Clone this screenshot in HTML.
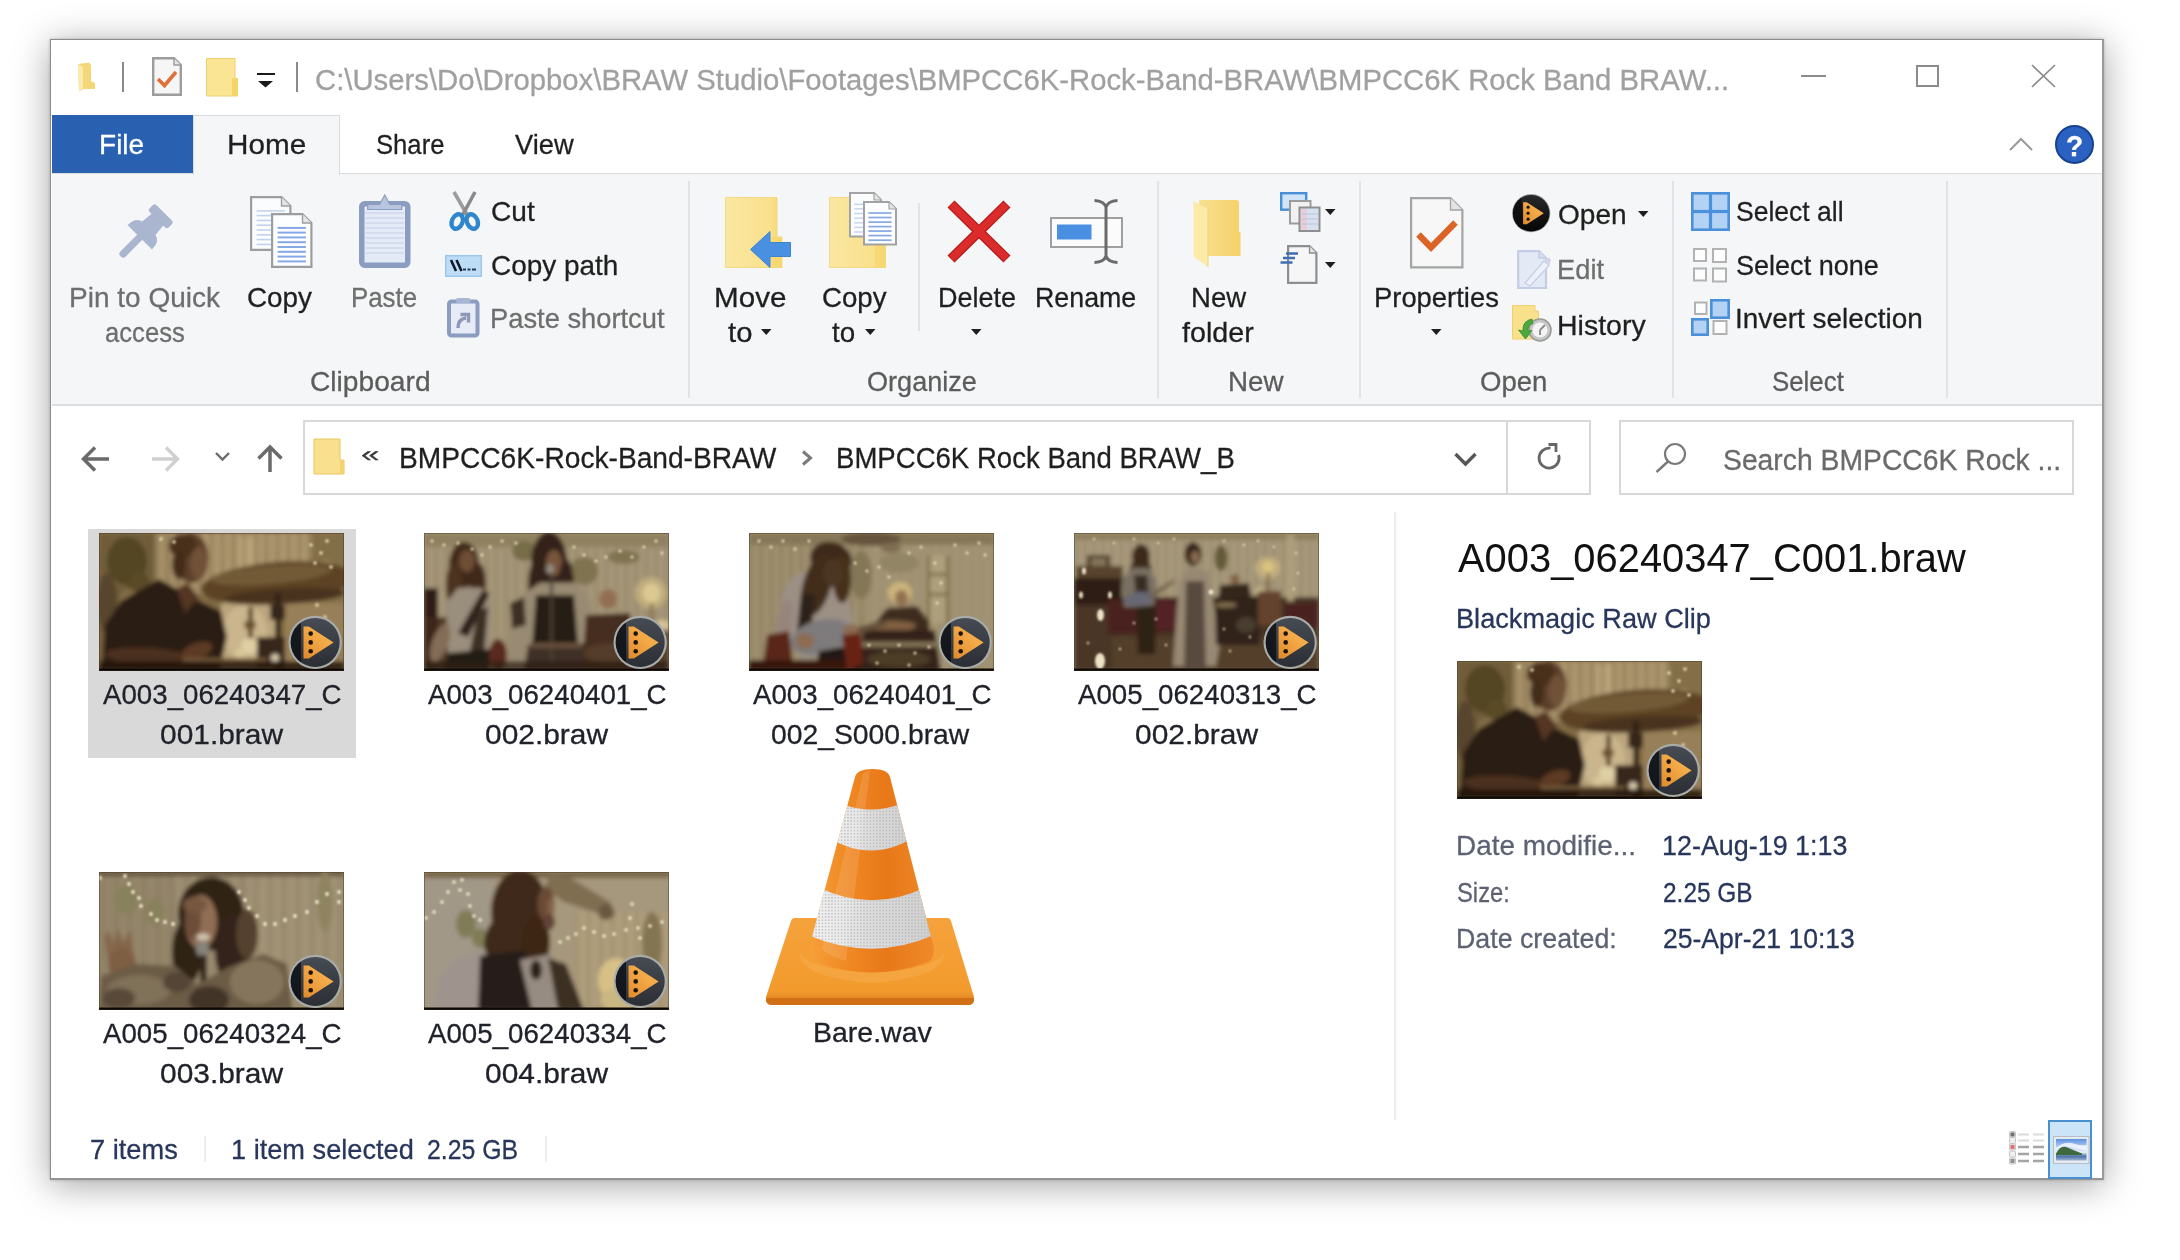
<!DOCTYPE html>
<html lang="en"><head><meta charset="utf-8"><title>File Explorer</title>
<style>
html,body{margin:0;padding:0;}
body{width:2180px;height:1260px;background:#fff;position:relative;overflow:hidden;font-family:"Liberation Sans", sans-serif;}
.a{position:absolute;box-sizing:border-box;}
.t{position:absolute;white-space:nowrap;line-height:1;transform-origin:0 0;display:block;-webkit-text-stroke:0.28px;}
svg{overflow:visible;}
</style></head>
<body>
<div class="a" style="left:50px;top:38.5px;width:2054px;height:1141.5px;background:#fff;border:1.5px solid #8c8c8c;border-right:2.5px solid #9a9a9a;border-bottom:2px solid #949494;box-shadow:0 5px 34px rgba(0,0,0,.36),0 0 3px rgba(0,0,0,.2);"></div>
<span class="t" style="left:315.0px;top:65.5px;font-size:29px;color:#a0a0a0;transform:scaleX(1.0097);">C:\Users\Do\Dropbox\BRAW Studio\Footages\BMPCC6K-Rock-Band-BRAW\BMPCC6K Rock Band BRAW...</span>
<div class="a" style="left:122px;top:62px;width:2px;height:30px;background:#8a8a8a;"></div>
<div class="a" style="left:296px;top:62px;width:2px;height:30px;background:#8a8a8a;"></div>
<div class="a" style="left:1801px;top:75px;width:25px;height:2px;background:#8c8c8c;"></div>
<div class="a" style="left:1916px;top:65px;width:23px;height:22px;border:2px solid #8c8c8c;"></div>
<svg class="a" style="left:2031px;top:64px;" width="25" height="24" viewBox="0 0 25 24"><path d="M1 1 L24 23 M24 1 L1 23" stroke="#8a8a8a" stroke-width="1.7" fill="none"/></svg>
<div class="a" style="left:52px;top:115px;width:141px;height:58px;background:#2a60b0;"></div>
<span class="t" style="left:99.0px;top:130.9px;font-size:28px;color:#ffffff;transform:scaleX(1.0013);">File</span>
<div class="a" style="left:52px;top:173px;width:2050px;height:233px;background:#f5f6f7;border-top:1.5px solid #dadbdc;border-bottom:2px solid #dcdddf;"></div>
<div class="a" style="left:193px;top:115px;width:147px;height:60px;background:#f5f6f7;border:1px solid #dadbdc;border-bottom:none;"></div>
<span class="t" style="left:226.9px;top:130.9px;font-size:28px;color:#1f1f1f;transform:scaleX(1.0594);">Home</span>
<span class="t" style="left:376.1px;top:130.9px;font-size:28px;color:#1f1f1f;transform:scaleX(0.9160);">Share</span>
<span class="t" style="left:515.0px;top:130.9px;font-size:28px;color:#1f1f1f;transform:scaleX(0.9744);">View</span>
<svg class="a" style="left:2009px;top:137px;" width="24" height="14" viewBox="0 0 24 14"><path d="M1 13 L12 2 L23 13" stroke="#9a9a9a" stroke-width="2" fill="none"/></svg>
<div class="a" style="left:2055px;top:124.5px;width:39px;height:39px;background:#2b62c2;border-radius:50%;border:2.5px solid #17428f;"></div>
<span class="t" style="left:2066.1px;top:130.7px;font-size:30px;color:#ffffff;transform:scaleX(0.9375);font-weight:700;">?</span>
<span class="t" style="left:69.3px;top:284.2px;font-size:28px;color:#6e6e6e;transform:scaleX(1.0010);">Pin to Quick</span>
<span class="t" style="left:105.1px;top:318.8px;font-size:28px;color:#6e6e6e;transform:scaleX(0.9161);">access</span>
<span class="t" style="left:247.0px;top:284.2px;font-size:28px;color:#1f1f1f;transform:scaleX(0.9943);">Copy</span>
<span class="t" style="left:351.2px;top:284.2px;font-size:28px;color:#6e6e6e;transform:scaleX(0.9228);">Paste</span>
<span class="t" style="left:491.0px;top:198.4px;font-size:28px;color:#1f1f1f;transform:scaleX(1.0025);">Cut</span>
<span class="t" style="left:491.0px;top:252.2px;font-size:28px;color:#1f1f1f;transform:scaleX(0.9979);">Copy path</span>
<span class="t" style="left:490.0px;top:305.4px;font-size:28px;color:#6e6e6e;transform:scaleX(0.9752);">Paste shortcut</span>
<span class="t" style="left:310.0px;top:368.4px;font-size:28px;color:#5c5c5c;transform:scaleX(1.0062);">Clipboard</span>
<span class="t" style="left:713.9px;top:284.2px;font-size:28px;color:#1f1f1f;transform:scaleX(1.0577);">Move</span>
<span class="t" style="left:727.6px;top:318.8px;font-size:28px;color:#1f1f1f;transform:scaleX(1.0448);">to</span>
<span class="t" style="left:822.4px;top:284.2px;font-size:28px;color:#1f1f1f;transform:scaleX(0.9881);">Copy</span>
<span class="t" style="left:832.4px;top:318.8px;font-size:28px;color:#1f1f1f;transform:scaleX(0.9921);">to</span>
<span class="t" style="left:938.1px;top:284.2px;font-size:28px;color:#1f1f1f;transform:scaleX(0.9647);">Delete</span>
<span class="t" style="left:1035.1px;top:284.2px;font-size:28px;color:#1f1f1f;transform:scaleX(0.9568);">Rename</span>
<span class="t" style="left:866.6px;top:368.4px;font-size:28px;color:#5c5c5c;transform:scaleX(0.9675);">Organize</span>
<span class="t" style="left:1190.9px;top:284.2px;font-size:28px;color:#1f1f1f;transform:scaleX(0.9837);">New</span>
<span class="t" style="left:1182.4px;top:318.8px;font-size:28px;color:#1f1f1f;transform:scaleX(1.0241);">folder</span>
<span class="t" style="left:1228.0px;top:368.4px;font-size:28px;color:#5c5c5c;transform:scaleX(0.9910);">New</span>
<span class="t" style="left:1373.7px;top:284.2px;font-size:28px;color:#1f1f1f;transform:scaleX(0.9782);">Properties</span>
<span class="t" style="left:1558.0px;top:200.6px;font-size:28px;color:#1f1f1f;transform:scaleX(1.0012);">Open</span>
<span class="t" style="left:1557.1px;top:255.7px;font-size:28px;color:#6e6e6e;transform:scaleX(0.9748);">Edit</span>
<span class="t" style="left:1557.0px;top:312.1px;font-size:28px;color:#1f1f1f;transform:scaleX(1.0174);">History</span>
<span class="t" style="left:1479.5px;top:368.4px;font-size:28px;color:#5c5c5c;transform:scaleX(0.9845);">Open</span>
<span class="t" style="left:1736.4px;top:197.9px;font-size:28px;color:#1f1f1f;transform:scaleX(0.9471);">Select all</span>
<span class="t" style="left:1736.3px;top:251.8px;font-size:28px;color:#1f1f1f;transform:scaleX(0.9657);">Select none</span>
<span class="t" style="left:1735.3px;top:305.2px;font-size:28px;color:#1f1f1f;transform:scaleX(0.9971);">Invert selection</span>
<span class="t" style="left:1771.5px;top:368.4px;font-size:28px;color:#5c5c5c;transform:scaleX(0.9229);">Select</span>
<div class="a" style="left:688px;top:181px;width:2px;height:217px;background:#e2e3e5;"></div>
<div class="a" style="left:1157px;top:181px;width:2px;height:217px;background:#e2e3e5;"></div>
<div class="a" style="left:1358.5px;top:181px;width:2px;height:217px;background:#e2e3e5;"></div>
<div class="a" style="left:1672px;top:181px;width:2px;height:217px;background:#e2e3e5;"></div>
<div class="a" style="left:1945.7px;top:181px;width:2px;height:217px;background:#e2e3e5;"></div>
<div class="a" style="left:918px;top:203px;width:2px;height:128px;background:#e2e3e5;"></div>
<svg class="a" style="left:761px;top:329px;" width="10.5" height="6" viewBox="0 0 10.5 6"><path d="M0 0 H10.5 L5.25 6 Z" fill="#1f1f1f"/></svg>
<svg class="a" style="left:865px;top:329px;" width="10.5" height="6" viewBox="0 0 10.5 6"><path d="M0 0 H10.5 L5.25 6 Z" fill="#1f1f1f"/></svg>
<svg class="a" style="left:971.4px;top:329px;" width="10.5" height="6" viewBox="0 0 10.5 6"><path d="M0 0 H10.5 L5.25 6 Z" fill="#1f1f1f"/></svg>
<svg class="a" style="left:1431px;top:329px;" width="10.5" height="6" viewBox="0 0 10.5 6"><path d="M0 0 H10.5 L5.25 6 Z" fill="#1f1f1f"/></svg>
<svg class="a" style="left:1324.5px;top:208.5px;" width="10.5" height="6" viewBox="0 0 10.5 6"><path d="M0 0 H10.5 L5.25 6 Z" fill="#1f1f1f"/></svg>
<svg class="a" style="left:1324.5px;top:261.5px;" width="10.5" height="6" viewBox="0 0 10.5 6"><path d="M0 0 H10.5 L5.25 6 Z" fill="#1f1f1f"/></svg>
<svg class="a" style="left:1637.5px;top:211px;" width="10.5" height="6" viewBox="0 0 10.5 6"><path d="M0 0 H10.5 L5.25 6 Z" fill="#1f1f1f"/></svg>
<svg class="a" style="left:76px;top:62px;" width="20" height="30" viewBox="0 0 20 30"><path d="M2 2 L13 0.5 L15 3 V19 L19 21 V27 L8 27 L3 29.5 Z" fill="#f3d778"/><path d="M2 2 L7 5 V27.5 L3 29.5 Z" fill="#fbeab0"/></svg>
<svg class="a" style="left:152px;top:57px;" width="30" height="39" viewBox="0 0 30 39"><path d="M1.2 1.2 H22 L28.8 8 V37.8 H1.2 Z" fill="#f6f6f6" stroke="#9c9c9c" stroke-width="2.4"/><path d="M22 1.2 V8 H28.8" fill="#e4e4e4" stroke="#9c9c9c" stroke-width="1.44"/><path d="M6 22 L12.5 28.5 L24 15" stroke="#e0703a" stroke-width="3.6" fill="none"/></svg>
<svg class="a" style="left:205.5px;top:57.5px;" width="32" height="38.5" viewBox="0 0 32 38.5"><path d="M0.5 0.5 H29 V20.405 H31.5 V38.0 H0.5 Z" fill="#fae595" stroke="#efd070" stroke-width="1"/><path d="M26 20.405 H31.5 V38.0 H26 Z" fill="#f5d565"/></svg>
<div class="a" style="left:256.5px;top:72.5px;width:18.5px;height:2.2px;background:#1a1a1a;"></div>
<svg class="a" style="left:258px;top:81px;" width="15" height="7" viewBox="0 0 15 7"><path d="M0 0 H15 L7.5 6.5 Z" fill="#1a1a1a"/></svg>
<svg class="a" style="left:119px;top:205px;" width="54" height="54" viewBox="0 0 54 54"><g transform="translate(34.5 18.5) rotate(45) scale(1.08)" fill="#aab5cf"><rect x="-12.5" y="-14" width="25" height="9" rx="2.5"/><path d="M-7.5 -6 H7.5 L9 8 H-9 Z"/><path d="M-16 18 Q-16 7 -8 6 H8 Q16 7 16 18 Z"/><rect x="-3.4" y="16" width="6.8" height="27" rx="3"/></g></svg>
<svg class="a" style="left:249.5px;top:196px;" width="41.5" height="55" viewBox="0 0 41.5 55"><path d="M1.1 1.1 H31.5 L40.4 10 V53.9 H1.1 Z" fill="#fbfcfe" stroke="#9d9d9d" stroke-width="2.2"/><path d="M31.5 1.1 V10 H40.4" fill="#e4e4e4" stroke="#9d9d9d" stroke-width="1.32"/><path d="M6.6 14.9 H34.9" stroke="#c3d3ee" stroke-width="1.6"/><path d="M6.6 19.6 H34.9" stroke="#c3d3ee" stroke-width="1.6"/><path d="M6.6 24.4 H34.9" stroke="#c3d3ee" stroke-width="1.6"/><path d="M6.6 29.2 H34.9" stroke="#c3d3ee" stroke-width="1.6"/><path d="M6.6 34.0 H34.9" stroke="#c3d3ee" stroke-width="1.6"/><path d="M6.6 38.8 H34.9" stroke="#c3d3ee" stroke-width="1.6"/><path d="M6.6 43.6 H34.9" stroke="#c3d3ee" stroke-width="1.6"/><path d="M6.6 48.4 H34.9" stroke="#c3d3ee" stroke-width="1.6"/></svg>
<svg class="a" style="left:270.5px;top:213px;" width="41.5" height="55" viewBox="0 0 41.5 55"><path d="M1.1 1.1 H31.5 L40.4 10 V53.9 H1.1 Z" fill="#fdfeff" stroke="#9d9d9d" stroke-width="2.2"/><path d="M31.5 1.1 V10 H40.4" fill="#e4e4e4" stroke="#9d9d9d" stroke-width="1.32"/><path d="M6.6 14.9 H34.9" stroke="#86a8e4" stroke-width="2"/><path d="M6.6 19.6 H34.9" stroke="#86a8e4" stroke-width="2"/><path d="M6.6 24.4 H34.9" stroke="#86a8e4" stroke-width="2"/><path d="M6.6 29.2 H34.9" stroke="#86a8e4" stroke-width="2"/><path d="M6.6 34.0 H34.9" stroke="#86a8e4" stroke-width="2"/><path d="M6.6 38.8 H34.9" stroke="#86a8e4" stroke-width="2"/><path d="M6.6 43.6 H34.9" stroke="#86a8e4" stroke-width="2"/><path d="M6.6 48.4 H34.9" stroke="#86a8e4" stroke-width="2"/></svg>
<svg class="a" style="left:358.5px;top:194.5px;" width="51.5" height="73" viewBox="0 0 51.5 73"><rect x="2.75" y="8.75" width="46.0" height="61.5" rx="3" fill="#e4eaf6" stroke="#8b9cc1" stroke-width="5.5"/><path d="M6.5 18.0 H45.0" stroke="#cfd8ea" stroke-width="1.4"/><path d="M6.5 23.0 H45.0" stroke="#cfd8ea" stroke-width="1.4"/><path d="M6.5 28.0 H45.0" stroke="#cfd8ea" stroke-width="1.4"/><path d="M6.5 33.0 H45.0" stroke="#cfd8ea" stroke-width="1.4"/><path d="M6.5 38.0 H45.0" stroke="#cfd8ea" stroke-width="1.4"/><path d="M6.5 43.0 H45.0" stroke="#cfd8ea" stroke-width="1.4"/><path d="M6.5 48.0 H45.0" stroke="#cfd8ea" stroke-width="1.4"/><path d="M6.5 53.0 H45.0" stroke="#cfd8ea" stroke-width="1.4"/><path d="M6.5 58.0 H45.0" stroke="#cfd8ea" stroke-width="1.4"/><path d="M8.755 14.5 V9.5 H20.6 L25.75 0 L30.9 9.5 H42.745 V14.5 Z" fill="#b9c6df" stroke="#8b9cc1" stroke-width="1.2"/></svg>
<svg class="a" style="left:449px;top:191px;" width="32" height="41" viewBox="0 0 32 41"><path d="M5 1 L20 27" stroke="#9c9c9c" stroke-width="3.6"/><path d="M26 1 L12 27" stroke="#8a8a8a" stroke-width="3.6"/><ellipse cx="8.2" cy="30.5" rx="5.3" ry="7.6" transform="rotate(24 8.2 30.5)" fill="none" stroke="#2e86cf" stroke-width="4.4"/><ellipse cx="23.3" cy="30.5" rx="5.3" ry="7.6" transform="rotate(-24 23.3 30.5)" fill="none" stroke="#2e86cf" stroke-width="4.4"/></svg>
<svg class="a" style="left:444.5px;top:254.5px;" width="37" height="22" viewBox="0 0 37 22"><rect x="0.7" y="0.7" width="35.6" height="20.6" fill="#bddcf6" stroke="#9cc5ea" stroke-width="1.4"/><path d="M6 5 L11 16 M11.5 5 L16.5 16" stroke="#10182a" stroke-width="2.6"/><path d="M18 14.5 H21 M22.5 14.5 H25.5 M27 14.5 H31" stroke="#2a3a55" stroke-width="1.8"/></svg>
<svg class="a" style="left:446.5px;top:298px;" width="32.5" height="39.5" viewBox="0 0 32.5 39.5"><rect x="2" y="3.5" width="28.5" height="34" rx="2.5" fill="#e6ebf6" stroke="#8b9cc1" stroke-width="4"/><rect x="9" y="0" width="14.5" height="5" rx="2" fill="#a9b6d3"/><path d="M11 30 Q11 21 19 20 M13.5 16.5 H21.5 V24.5" stroke="#8d97ba" stroke-width="3.4" fill="none"/></svg>
<svg class="a" style="left:724.5px;top:196.5px;" width="57.5" height="71" viewBox="0 0 57.5 71"><defs><linearGradient id="fg724" x1="0" x2="1"><stop offset="0" stop-color="#fbe7a2"/><stop offset="0.8" stop-color="#f9e08c"/><stop offset="1" stop-color="#f4d369"/></linearGradient></defs><path d="M0.5 0.5 H52 V40 H57.0 V70.5 H0.5 Z" fill="url(#fg724)" stroke="#f3d985" stroke-width="1"/><path d="M47 40 H57.0 V70.5 H47 Z" fill="#f6d76f" opacity=".7"/></svg>
<svg class="a" style="left:750px;top:231px;" width="41" height="37" viewBox="0 0 41 37"><path d="M0.5 18.5 L20 0.5 V11.5 H40.5 V25.5 H20 V36.5 Z" fill="#4a90e2" stroke="#3f82d2" stroke-width="1"/></svg>
<svg class="a" style="left:829px;top:196.5px;" width="57" height="71" viewBox="0 0 57 71"><defs><linearGradient id="fg829" x1="0" x2="1"><stop offset="0" stop-color="#fbe7a2"/><stop offset="0.8" stop-color="#f9e08c"/><stop offset="1" stop-color="#f4d369"/></linearGradient></defs><path d="M0.5 0.5 H51 V40 H56.5 V70.5 H0.5 Z" fill="url(#fg829)" stroke="#f3d985" stroke-width="1"/><path d="M46 40 H56.5 V70.5 H46 Z" fill="#f6d76f" opacity=".7"/></svg>
<svg class="a" style="left:849px;top:192px;" width="33" height="45.5" viewBox="0 0 33 45.5"><path d="M1.0 1.0 H25 L32.0 8 V44.5 H1.0 Z" fill="#fbfcfe" stroke="#a2a2a2" stroke-width="2"/><path d="M25 1.0 V8 H32.0" fill="#e4e4e4" stroke="#a2a2a2" stroke-width="1.2"/><path d="M5.3 12.3 H27.7" stroke="#c3d3ee" stroke-width="1.4"/><path d="M5.3 16.9 H27.7" stroke="#c3d3ee" stroke-width="1.4"/><path d="M5.3 21.5 H27.7" stroke="#c3d3ee" stroke-width="1.4"/><path d="M5.3 26.2 H27.7" stroke="#c3d3ee" stroke-width="1.4"/><path d="M5.3 30.8 H27.7" stroke="#c3d3ee" stroke-width="1.4"/><path d="M5.3 35.4 H27.7" stroke="#c3d3ee" stroke-width="1.4"/><path d="M5.3 40.0 H27.7" stroke="#c3d3ee" stroke-width="1.4"/></svg>
<svg class="a" style="left:862.5px;top:200.5px;" width="34" height="44.5" viewBox="0 0 34 44.5"><path d="M1.0 1.0 H26 L33.0 8 V43.5 H1.0 Z" fill="#fdfeff" stroke="#a2a2a2" stroke-width="2"/><path d="M26 1.0 V8 H33.0" fill="#e4e4e4" stroke="#a2a2a2" stroke-width="1.2"/><path d="M5.4 12.0 H28.6" stroke="#86a8e4" stroke-width="1.7"/><path d="M5.4 16.5 H28.6" stroke="#86a8e4" stroke-width="1.7"/><path d="M5.4 21.1 H28.6" stroke="#86a8e4" stroke-width="1.7"/><path d="M5.4 25.6 H28.6" stroke="#86a8e4" stroke-width="1.7"/><path d="M5.4 30.1 H28.6" stroke="#86a8e4" stroke-width="1.7"/><path d="M5.4 34.6 H28.6" stroke="#86a8e4" stroke-width="1.7"/><path d="M5.4 39.2 H28.6" stroke="#86a8e4" stroke-width="1.7"/></svg>
<svg class="a" style="left:947px;top:200px;" width="64" height="63" viewBox="0 0 64 63"><path d="M4 4 L60 59 M60 4 L4 59" stroke="#b21a1a" stroke-width="10" fill="none"/><path d="M4.5 4.5 L59.5 58.5 M59.5 4.5 L4.5 58.5" stroke="#dc2b2b" stroke-width="7.4" fill="none"/></svg>
<svg class="a" style="left:1050px;top:199px;" width="73" height="65" viewBox="0 0 73 65"><rect x="1" y="19" width="71" height="29" fill="#fbfbfb" stroke="#a0a0a0" stroke-width="2"/><rect x="7" y="25.5" width="34.5" height="15" fill="#4a90e2"/><path d="M44.5 1.5 Q54 2 56 8 Q58 2 67.5 1.5 M44.5 63.5 Q54 63 56 57 Q58 63 67.5 63.5 M56 7 V58" stroke="#6a6a6a" stroke-width="3" fill="none"/></svg>
<svg class="a" style="left:1193px;top:198px;" width="48" height="70" viewBox="0 0 48 70"><defs><linearGradient id="nf1" x1="0" x2="1"><stop offset="0" stop-color="#f8e090"/><stop offset="1" stop-color="#f4d26a"/></linearGradient></defs><path d="M6 2 H43 Q46 2 46 5 V34 H47.5 V58 H10 Z" fill="url(#nf1)"/><path d="M0.5 3 L15 11 V69 L0.5 58.5 Z" fill="#fbeaa8"/><path d="M15 11 V69" stroke="#efd37a" stroke-width="1"/></svg>
<svg class="a" style="left:1279.5px;top:191.5px;" width="40.5" height="40" viewBox="0 0 40.5 40"><rect x="1.2" y="1.2" width="25" height="16.5" fill="#cfe4f8" stroke="#4a8fd6" stroke-width="2.4"/><rect x="10" y="9" width="20.5" height="22.5" fill="#f1f1f1" stroke="#9c9c9c" stroke-width="2"/><rect x="19.5" y="15.5" width="20" height="23.5" fill="#d9e1f0" stroke="#8e8e8e" stroke-width="2"/><rect x="21" y="17" width="6" height="20.5" fill="#e9cdd6"/><path d="M22 22 H38 M22 27 H38 M22 32 H38" stroke="#b8c6e0" stroke-width="1.2"/></svg>
<svg class="a" style="left:1286.5px;top:245px;" width="30.5" height="39" viewBox="0 0 30.5 39"><path d="M1.1 1.1 H22.5 L29.4 8 V37.9 H1.1 Z" fill="#f6f6f6" stroke="#8e8e8e" stroke-width="2.2"/><path d="M22.5 1.1 V8 H29.4" fill="#e4e4e4" stroke="#8e8e8e" stroke-width="1.32"/></svg>
<svg class="a" style="left:1279.5px;top:251.5px;" width="19" height="15" viewBox="0 0 19 15"><path d="M6 1.5 H18 M3 6 H15 M0.5 10.5 H12.5" stroke="#3d6db3" stroke-width="2.6"/></svg>
<svg class="a" style="left:1409.5px;top:196.5px;" width="53.5" height="71.5" viewBox="0 0 53.5 71.5"><path d="M1.1 1.1 H40.5 L52.4 13 V70.4 H1.1 Z" fill="#f7f7f7" stroke="#a4a4a4" stroke-width="2.2"/><path d="M40.5 1.1 V13 H52.4" fill="#e4e4e4" stroke="#a4a4a4" stroke-width="1.32"/><path d="M8.5 37.5 L21 50.5 L45.5 25.5" stroke="#dc6226" stroke-width="6.4" fill="none"/></svg>
<svg class="a" style="left:1512px;top:194px;" width="38" height="38" viewBox="0 0 38 38"><defs><linearGradient id="bmrb" x1="0" y1="0" x2="0" y2="1"><stop offset="0" stop-color="#2a2a2c"/><stop offset="1" stop-color="#050506"/></linearGradient><linearGradient id="borb" x1="0" x2="1" y1="1" y2="0"><stop offset="0" stop-color="#e08a2c"/><stop offset="0.6" stop-color="#f4aa48"/><stop offset="1" stop-color="#f6b252"/></linearGradient><clipPath id="bcrb"><circle cx="19.2" cy="19.2" r="18.3"/></clipPath></defs><circle cx="19.2" cy="19.2" r="19.1" fill="#3a3a3a" opacity=".45"/><circle cx="19.2" cy="19.2" r="18.3" fill="url(#bmrb)"/><rect x="0.9" y="0.9" width="8.6" height="36.6" fill="#0b0e12" opacity=".8" clip-path="url(#bcrb)"/><path d="M11.1 8.2 H14.8 L31.8 19.2 L14.8 30.2 H11.1 Z" fill="url(#borb)"/><circle cx="16.1" cy="13.2" r="1.6" fill="#1a1410"/><circle cx="16.1" cy="19.2" r="1.6" fill="#1a1410"/><circle cx="16.1" cy="25.2" r="1.6" fill="#1a1410"/></svg>
<svg class="a" style="left:1516.5px;top:249.5px;" width="35" height="40" viewBox="0 0 35 40"><path d="M1.2 1.2 H22 L29 8 V38 H1.2 Z" fill="#e4e9f6" stroke="#c3cde6" stroke-width="2.2"/><path d="M22 1.2 V8 H29" fill="#d4dcef" stroke="#c3cde6" stroke-width="1.4"/><path d="M8 33 L27 11 L32 15.5 L13 36 Z" fill="#eef1f9" stroke="#c9d1e6" stroke-width="1.4"/><path d="M27 11 L30 8 Q33 7 34 10 L32 15.5 Z" fill="#cfd6ea"/></svg>
<svg class="a" style="left:1512px;top:305px;" width="41" height="40" viewBox="0 0 41 40"><path d="M0.5 0.5 H23 V6 H26.5 V34 H0.5 Z" fill="#f9e18c" stroke="#efd070" stroke-width="1"/><circle cx="28" cy="25" r="11" fill="#c6c6c6" stroke="#9a9a9a" stroke-width="1.6"/><circle cx="28" cy="25" r="7.6" fill="#f4f4f4"/><path d="M28 25 L33 20 M28 25 V30" stroke="#8a8a8a" stroke-width="1.8"/><path d="M20 14 Q10 16 11 26 L6.5 25 L13.5 34 L20 25.5 L16 26 Q15.5 20 21 18.5 Z" fill="#4aa83c" stroke="#3b8f30" stroke-width="0.8"/></svg>
<svg class="a" style="left:1690.5px;top:192px;" width="39" height="39" viewBox="0 0 39 39"><rect x="1.3" y="1.3" width="17.9" height="17.9" fill="#b4d2f3" stroke="#4a90da" stroke-width="2.6"/><rect x="19.8" y="1.3" width="17.9" height="17.9" fill="#b4d2f3" stroke="#4a90da" stroke-width="2.6"/><rect x="1.3" y="19.8" width="17.9" height="17.9" fill="#b4d2f3" stroke="#4a90da" stroke-width="2.6"/><rect x="19.8" y="19.8" width="17.9" height="17.9" fill="#b4d2f3" stroke="#4a90da" stroke-width="2.6"/></svg>
<svg class="a" style="left:1693px;top:247.5px;" width="35" height="34" viewBox="0 0 35 34"><rect x="1" y="1" width="12" height="12" fill="#fdfdfd" stroke="#b2b2b2" stroke-width="2"/><rect x="20" y="1" width="13" height="13" fill="#fdfdfd" stroke="#b2b2b2" stroke-width="2"/><rect x="1" y="20.5" width="12" height="12" fill="#fdfdfd" stroke="#b2b2b2" stroke-width="2"/><rect x="20" y="20.5" width="13" height="13" fill="#fdfdfd" stroke="#b2b2b2" stroke-width="2"/></svg>
<svg class="a" style="left:1690.5px;top:298.5px;" width="39" height="39" viewBox="0 0 39 39"><rect x="4" y="3.5" width="11.5" height="11.5" fill="#fdfdfd" stroke="#b2b2b2" stroke-width="2"/><rect x="20.3" y="1.3" width="17.4" height="17.4" fill="#b4d2f3" stroke="#4a90da" stroke-width="2.6"/><rect x="1.3" y="20.3" width="15.4" height="15.4" fill="#b4d2f3" stroke="#4a90da" stroke-width="2.6"/><rect x="22.5" y="22" width="13" height="13" fill="#fdfdfd" stroke="#b2b2b2" stroke-width="2"/></svg>
<svg class="a" style="left:82px;top:446px;" width="28" height="26" viewBox="0 0 28 26"><path d="M27 13 H2 M13 1.5 L1.5 13 L13 24.5" stroke="#6a6a6a" stroke-width="3.5" fill="none"/></svg>
<svg class="a" style="left:151px;top:446px;" width="28" height="26" viewBox="0 0 28 26"><path d="M1 13 H26 M15 1.5 L26.5 13 L15 24.5" stroke="#d0d0d0" stroke-width="3.5" fill="none"/></svg>
<svg class="a" style="left:215px;top:452px;" width="15" height="9" viewBox="0 0 15 9"><path d="M1 1 L7.5 7.5 L14 1" stroke="#6a6a6a" stroke-width="2.4" fill="none"/></svg>
<svg class="a" style="left:257px;top:445px;" width="26" height="28" viewBox="0 0 26 28"><path d="M13 27 V2 M1.5 13.5 L13 2 L24.5 13.5" stroke="#6a6a6a" stroke-width="3.5" fill="none"/></svg>
<div class="a" style="left:303px;top:419.5px;width:1288px;height:75.5px;background:#fff;border:2px solid #d8d8d8;"></div>
<div class="a" style="left:1505.5px;top:421px;width:2px;height:73px;background:#d8d8d8;"></div>
<div class="a" style="left:1619px;top:419.5px;width:454.5px;height:75.5px;background:#fff;border:2px solid #d8d8d8;"></div>
<svg class="a" style="left:314px;top:438px;" width="30" height="36" viewBox="0 0 30 36"><path d="M0 1 H26 V22 H30 V36 H0 Z" fill="#f9e08f" stroke="#e8c860" stroke-width="1"/><path d="M26 22 h4 v14 h-4z" fill="#f3d36c"/></svg>
<span class="t" style="left:361.0px;top:443.5px;font-size:22px;color:#3a3a3a;transform:scaleX(1.5000);">«</span>
<span class="t" style="left:399.1px;top:443.9px;font-size:29px;color:#1f1f1f;transform:scaleX(0.9703);">BMPCC6K-Rock-Band-BRAW</span>
<svg class="a" style="left:801px;top:450px;" width="12" height="16" viewBox="0 0 12 16"><path d="M2 1.5 L9.5 8 L2 14.5" stroke="#7a7a7a" stroke-width="3" fill="none"/></svg>
<span class="t" style="left:835.7px;top:443.9px;font-size:29px;color:#1f1f1f;transform:scaleX(0.9505);">BMPCC6K Rock Band BRAW_B</span>
<svg class="a" style="left:1454px;top:452px;" width="23" height="15" viewBox="0 0 23 15"><path d="M1.5 2 L11.5 12 L21.5 2" stroke="#555" stroke-width="3.4" fill="none"/></svg>
<svg class="a" style="left:1536px;top:444px;" width="26" height="27" viewBox="0 0 26 27"><path d="M14.5 4.2 A10 10 0 1 0 22.6 11" stroke="#666" stroke-width="2.8" fill="none"/><path d="M12.5 0.5 H20 V8" stroke="#666" stroke-width="2.8" fill="none"/></svg>
<svg class="a" style="left:1655px;top:442px;" width="32" height="31" viewBox="0 0 32 31"><circle cx="20" cy="12" r="10" stroke="#7a7a7a" stroke-width="2.2" fill="none"/><path d="M13 19.5 L1.5 30" stroke="#7a7a7a" stroke-width="2.4"/></svg>
<span class="t" style="left:1722.6px;top:445.6px;font-size:29px;color:#6a6a6a;transform:scaleX(0.9760);">Search BMPCC6K Rock ...</span>
<div class="a" style="left:87.5px;top:528.5px;width:268.5px;height:229px;background:#d9d9d9;"></div>
<span class="t" style="left:103.0px;top:681.4px;font-size:28px;color:#20222a;transform:scaleX(0.9887);">A003_06240347_C</span>
<span class="t" style="left:159.7px;top:720.6px;font-size:28px;color:#20222a;transform:scaleX(1.0682);">001.braw</span>
<span class="t" style="left:428.0px;top:681.4px;font-size:28px;color:#20222a;transform:scaleX(0.9887);">A003_06240401_C</span>
<span class="t" style="left:484.7px;top:720.6px;font-size:28px;color:#20222a;transform:scaleX(1.0682);">002.braw</span>
<span class="t" style="left:753.0px;top:681.4px;font-size:28px;color:#20222a;transform:scaleX(0.9887);">A003_06240401_C</span>
<span class="t" style="left:771.0px;top:720.6px;font-size:28px;color:#20222a;transform:scaleX(1.0106);">002_S000.braw</span>
<span class="t" style="left:1078.0px;top:681.4px;font-size:28px;color:#20222a;transform:scaleX(0.9887);">A005_06240313_C</span>
<span class="t" style="left:1134.7px;top:720.6px;font-size:28px;color:#20222a;transform:scaleX(1.0682);">002.braw</span>
<span class="t" style="left:103.0px;top:1020.4px;font-size:28px;color:#20222a;transform:scaleX(0.9887);">A005_06240324_C</span>
<span class="t" style="left:159.7px;top:1059.6px;font-size:28px;color:#20222a;transform:scaleX(1.0682);">003.braw</span>
<span class="t" style="left:428.0px;top:1020.4px;font-size:28px;color:#20222a;transform:scaleX(0.9887);">A005_06240334_C</span>
<span class="t" style="left:484.7px;top:1059.6px;font-size:28px;color:#20222a;transform:scaleX(1.0682);">004.braw</span>
<span class="t" style="left:812.6px;top:1019.4px;font-size:28px;color:#20222a;transform:scaleX(1.0173);">Bare.wav</span>
<svg class="a" width="0" height="0" style="left:0;top:0"><defs><filter id="bl2" x="-10%" y="-10%" width="120%" height="120%"><feGaussianBlur stdDeviation="2.2"/></filter><filter id="bl1" x="-10%" y="-10%" width="120%" height="120%"><feGaussianBlur stdDeviation="1.1"/></filter><filter id="bl4" x="-20%" y="-20%" width="140%" height="140%"><feGaussianBlur stdDeviation="4"/></filter><clipPath id="tc"><rect x="0" y="0" width="245" height="138"/></clipPath></defs></svg>
<svg class="a" style="left:99px;top:533px;" width="245" height="138" viewBox="0 0 245 138"><g clip-path="url(#tc)"><rect width="245" height="138" fill="#8e7c56"/><g filter="url(#bl2)"><rect x="0" y="0" width="245" height="138" fill="#8a764e"/><rect x="50" y="0" width="170" height="62" fill="#b09c74"/><rect x="96" y="0" width="112" height="40" fill="#b8a47a"/><rect x="140" y="4" width="16" height="36" fill="#c6b288"/><rect x="55" y="0" width="4.95" height="70" fill="#5a4a2c" opacity="0.2"/><rect x="66" y="0" width="4.95" height="70" fill="#5a4a2c" opacity="0.2"/><rect x="77" y="0" width="4.95" height="70" fill="#5a4a2c" opacity="0.2"/><rect x="88" y="0" width="4.95" height="70" fill="#5a4a2c" opacity="0.2"/><rect x="99" y="0" width="4.95" height="70" fill="#5a4a2c" opacity="0.2"/><rect x="110" y="0" width="4.95" height="70" fill="#5a4a2c" opacity="0.2"/><rect x="121" y="0" width="4.95" height="70" fill="#5a4a2c" opacity="0.2"/><rect x="132" y="0" width="4.95" height="70" fill="#5a4a2c" opacity="0.2"/><rect x="143" y="0" width="4.95" height="70" fill="#5a4a2c" opacity="0.2"/><rect x="154" y="0" width="4.95" height="70" fill="#5a4a2c" opacity="0.2"/><rect x="165" y="0" width="4.95" height="70" fill="#5a4a2c" opacity="0.2"/><rect x="176" y="0" width="4.95" height="70" fill="#5a4a2c" opacity="0.2"/><rect x="187" y="0" width="4.95" height="70" fill="#5a4a2c" opacity="0.2"/><rect x="198" y="0" width="4.95" height="70" fill="#5a4a2c" opacity="0.2"/><rect x="209" y="0" width="4.95" height="70" fill="#5a4a2c" opacity="0.2"/><rect x="0" y="0" width="56" height="138" fill="#75643f"/><ellipse cx="28" cy="28" rx="20" ry="24" fill="#554a28"/><ellipse cx="40" cy="56" rx="12" ry="18" fill="#5c4f2c"/><ellipse cx="8" cy="70" rx="10" ry="30" fill="#584830"/><ellipse cx="30" cy="70" rx="10" ry="14" fill="#8a7650"/><rect x="213" y="0" width="32" height="75" fill="#8a7850"/><ellipse cx="226" cy="38" rx="12" ry="10" fill="#a89a6c"/><rect x="186" y="70" width="59" height="68" fill="#a08a62"/><rect x="122" y="70" width="58" height="68" fill="#c8b48c"/><ellipse cx="146" cy="100" rx="22" ry="28" fill="#d8c69c"/><ellipse cx="178" cy="50" rx="76" ry="21" fill="#5e4628" transform="rotate(-5 178 50)"/><ellipse cx="172" cy="42" rx="60" ry="9" fill="#77603c" transform="rotate(-5 172 42)"/><ellipse cx="186" cy="63" rx="60" ry="8" fill="#4a3420" transform="rotate(-3 186 63)"/><rect x="176" y="60" width="6" height="78" fill="#2e2218"/><rect x="171" y="72" width="15" height="15" fill="#32261c"/><rect x="149" y="74" width="5" height="36" fill="#5e4828"/><ellipse cx="151" cy="92" rx="6" ry="5" fill="#6e5630"/><rect x="158" y="104" width="28" height="30" fill="#35261a"/><ellipse cx="150" cy="113" rx="8" ry="8" fill="#f0e2b6"/><ellipse cx="141" cy="120" rx="5" ry="5" fill="#e8d8a8"/><ellipse cx="176" cy="125" rx="4" ry="4" fill="#e8dcc0"/><ellipse cx="92" cy="25" rx="17.5" ry="25" fill="#5e422e"/><ellipse cx="84" cy="13" rx="14" ry="12" fill="#49331f"/><ellipse cx="100" cy="30" rx="9" ry="16" fill="#75563c"/><ellipse cx="80" cy="32" rx="7" ry="14" fill="#422e1e"/><polygon points="3,138 6,92 22,68 60,46 78,56 96,66 122,78 128,104 120,138" fill="#261b14"/><polygon points="78,56 88,50 100,64 86,80" fill="#553826"/><ellipse cx="52" cy="124" rx="46" ry="9" fill="#4c3120" transform="rotate(4 52 124)"/><ellipse cx="98" cy="118" rx="16" ry="8" fill="#5e3e28" transform="rotate(-20 98 118)"/><rect x="84" y="125" width="84" height="3.5" fill="#7a6242"/><rect x="0" y="128" width="245" height="10" fill="#20140a" opacity="0.85"/></g><rect width="245" height="138" fill="#4a2c08" opacity="0.1"/><g filter="url(#bl1)"><circle cx="62" cy="6" r="1.8" fill="#e8dcb0"/><circle cx="75" cy="9" r="1.8" fill="#e8dcb0"/><circle cx="212" cy="12" r="1.8" fill="#e8dcb0"/><circle cx="222" cy="20" r="1.8" fill="#e8dcb0"/><circle cx="228" cy="8" r="1.8" fill="#e8dcb0"/><circle cx="216" cy="30" r="1.8" fill="#e8dcb0"/><circle cx="232" cy="34" r="1.8" fill="#e8dcb0"/><circle cx="218" cy="72" r="1.8" fill="#e8dcb0"/><circle cx="226" cy="84" r="1.8" fill="#e8dcb0"/></g><rect x="0" y="135.5" width="245" height="2.5" fill="#0c0806"/><rect x="0" y="0" width="245" height="138" fill="none" stroke="#3a2c1c" stroke-width="1.5" opacity=".55"/></g><defs><linearGradient id="bmt1" x1="0" y1="0" x2="0" y2="1"><stop offset="0" stop-color="#474c54"/><stop offset="1" stop-color="#2b2e34"/></linearGradient><linearGradient id="bot1" x1="0" x2="1" y1="1" y2="0"><stop offset="0" stop-color="#e08a2c"/><stop offset="0.6" stop-color="#f4aa48"/><stop offset="1" stop-color="#f6b252"/></linearGradient><clipPath id="bct1"><circle cx="216.2" cy="109.4" r="24.5"/></clipPath></defs><circle cx="216.2" cy="109.4" r="26.7" fill="#a9aba8"/><circle cx="216.2" cy="109.4" r="24.5" fill="url(#bmt1)"/><rect x="189.5" y="82.7" width="12.5" height="53.4" fill="#0b0e12" opacity=".8" clip-path="url(#bct1)"/><path d="M204.5 93.4 H209.8 L234.6 109.4 L209.8 125.4 H204.5 Z" fill="url(#bot1)"/><circle cx="211.7" cy="100.6" r="2.3" fill="#1a1410"/><circle cx="211.7" cy="109.4" r="2.3" fill="#1a1410"/><circle cx="211.7" cy="118.2" r="2.3" fill="#1a1410"/></svg>
<svg class="a" style="left:424px;top:533px;" width="245" height="138" viewBox="0 0 245 138"><g clip-path="url(#tc)"><rect width="245" height="138" fill="#b0a486"/><g filter="url(#bl2)"><rect x="0" y="0" width="245" height="138" fill="#b0a486"/><rect x="0" y="0" width="4.5" height="138" fill="#5a4c30" opacity="0.12"/><rect x="10" y="0" width="4.5" height="138" fill="#5a4c30" opacity="0.12"/><rect x="20" y="0" width="4.5" height="138" fill="#5a4c30" opacity="0.12"/><rect x="30" y="0" width="4.5" height="138" fill="#5a4c30" opacity="0.12"/><rect x="40" y="0" width="4.5" height="138" fill="#5a4c30" opacity="0.12"/><rect x="50" y="0" width="4.5" height="138" fill="#5a4c30" opacity="0.12"/><rect x="60" y="0" width="4.5" height="138" fill="#5a4c30" opacity="0.12"/><rect x="70" y="0" width="4.5" height="138" fill="#5a4c30" opacity="0.12"/><rect x="80" y="0" width="4.5" height="138" fill="#5a4c30" opacity="0.12"/><rect x="90" y="0" width="4.5" height="138" fill="#5a4c30" opacity="0.12"/><rect x="100" y="0" width="4.5" height="138" fill="#5a4c30" opacity="0.12"/><rect x="110" y="0" width="4.5" height="138" fill="#5a4c30" opacity="0.12"/><rect x="120" y="0" width="4.5" height="138" fill="#5a4c30" opacity="0.12"/><rect x="130" y="0" width="4.5" height="138" fill="#5a4c30" opacity="0.12"/><rect x="140" y="0" width="4.5" height="138" fill="#5a4c30" opacity="0.12"/><rect x="150" y="0" width="4.5" height="138" fill="#5a4c30" opacity="0.12"/><rect x="160" y="0" width="4.5" height="138" fill="#5a4c30" opacity="0.12"/><rect x="170" y="0" width="4.5" height="138" fill="#5a4c30" opacity="0.12"/><rect x="180" y="0" width="4.5" height="138" fill="#5a4c30" opacity="0.12"/><rect x="190" y="0" width="4.5" height="138" fill="#5a4c30" opacity="0.12"/><rect x="200" y="0" width="4.5" height="138" fill="#5a4c30" opacity="0.12"/><rect x="210" y="0" width="4.5" height="138" fill="#5a4c30" opacity="0.12"/><rect x="220" y="0" width="4.5" height="138" fill="#5a4c30" opacity="0.12"/><rect x="230" y="0" width="4.5" height="138" fill="#5a4c30" opacity="0.12"/><rect x="240" y="0" width="4.5" height="138" fill="#5a4c30" opacity="0.12"/><rect x="0" y="0" width="245" height="14" fill="#978c6a"/><ellipse cx="160" cy="38" rx="14" ry="14" fill="#857c58"/><ellipse cx="100" cy="18" rx="12" ry="10" fill="#7c7450"/><ellipse cx="200" cy="24" rx="16" ry="7" fill="#857c58"/><rect x="0" y="55" width="14" height="83" fill="#2a1a12"/><rect x="0" y="84" width="24" height="54" fill="#402a1c" opacity="0.85"/><ellipse cx="40" cy="32" rx="15" ry="23" fill="#412c1d"/><ellipse cx="43" cy="28" rx="8" ry="11" fill="#73523a"/><ellipse cx="30" cy="52" rx="8" ry="22" fill="#4c3423"/><ellipse cx="54" cy="50" rx="8" ry="20" fill="#412c1d"/><polygon points="22,70 34,55 58,55 68,72 66,120 24,124" fill="#a39a8a"/><polygon points="58,58 66,60 44,104 34,100" fill="#2c241e"/><polygon points="54,78 64,74 60,122 46,118" fill="#3a3028"/><polygon points="24,120 66,116 66,138 20,138" fill="#1e1a16"/><ellipse cx="16" cy="110" rx="8" ry="20" fill="#8a7460" transform="rotate(20 16 110)"/><ellipse cx="74" cy="122" rx="9" ry="16" fill="#5c2c24"/><ellipse cx="125" cy="30" rx="18" ry="31" fill="#33231a"/><ellipse cx="130" cy="30" rx="8" ry="13" fill="#7d5c42"/><ellipse cx="112" cy="52" rx="8" ry="24" fill="#33231a"/><ellipse cx="142" cy="52" rx="8" ry="26" fill="#33231a"/><polygon points="84,138 86,92 98,62 116,50 152,50 166,66 172,104 168,138" fill="#a1967f"/><polygon points="112,62 150,62 154,112 108,114" fill="#221a16"/><polygon points="104,112 160,110 162,138 100,138" fill="#3c302a"/><polygon points="86,70 100,64 102,92 88,96" fill="#3a3028"/><rect x="126" y="36" width="3" height="102" fill="#4a4238"/><ellipse cx="126" cy="36" rx="4" ry="5" fill="#9a968a"/><rect x="106" y="110" width="52" height="5" fill="#6a5242"/><ellipse cx="184" cy="66" rx="9" ry="10" fill="#9a7858"/><polygon points="162,82 206,80 214,138 158,138" fill="#452f20"/><ellipse cx="186" cy="120" rx="26" ry="10" fill="#54402e"/><ellipse cx="227" cy="60" rx="16" ry="16" fill="#cbbb8a"/><ellipse cx="227.5" cy="60" rx="9" ry="10" fill="#ecdca2"/><rect x="226" y="70" width="3" height="20" fill="#8a7444"/><rect x="204" y="98" width="41" height="40" fill="#54422e"/><ellipse cx="238" cy="92" rx="8" ry="5" fill="#e4d6a4"/><rect x="0" y="128" width="245" height="10" fill="#2a1e14" opacity="0.7"/></g><rect width="245" height="138" fill="#4a2c08" opacity="0.1"/><g filter="url(#bl1)"><circle cx="8" cy="8" r="1.5" fill="#ece2bc"/><circle cx="20" cy="12" r="1.5" fill="#ece2bc"/><circle cx="34" cy="10" r="1.5" fill="#ece2bc"/><circle cx="48" cy="16" r="1.5" fill="#ece2bc"/><circle cx="58" cy="22" r="1.5" fill="#ece2bc"/><circle cx="66" cy="14" r="1.5" fill="#ece2bc"/><circle cx="78" cy="8" r="1.5" fill="#ece2bc"/><circle cx="92" cy="10" r="1.5" fill="#ece2bc"/><circle cx="150" cy="14" r="1.5" fill="#ece2bc"/><circle cx="160" cy="22" r="1.5" fill="#ece2bc"/><circle cx="172" cy="28" r="1.5" fill="#ece2bc"/><circle cx="182" cy="24" r="1.5" fill="#ece2bc"/><circle cx="196" cy="18" r="1.5" fill="#ece2bc"/><circle cx="208" cy="24" r="1.5" fill="#ece2bc"/><circle cx="220" cy="14" r="1.5" fill="#ece2bc"/><circle cx="232" cy="8" r="1.5" fill="#ece2bc"/><circle cx="238" cy="20" r="1.5" fill="#ece2bc"/></g><rect x="0" y="135.5" width="245" height="2.5" fill="#0c0806"/><rect x="0" y="0" width="245" height="138" fill="none" stroke="#3a2c1c" stroke-width="1.5" opacity=".55"/></g><defs><linearGradient id="bmt2" x1="0" y1="0" x2="0" y2="1"><stop offset="0" stop-color="#474c54"/><stop offset="1" stop-color="#2b2e34"/></linearGradient><linearGradient id="bot2" x1="0" x2="1" y1="1" y2="0"><stop offset="0" stop-color="#e08a2c"/><stop offset="0.6" stop-color="#f4aa48"/><stop offset="1" stop-color="#f6b252"/></linearGradient><clipPath id="bct2"><circle cx="216.2" cy="109.4" r="24.5"/></clipPath></defs><circle cx="216.2" cy="109.4" r="26.7" fill="#a9aba8"/><circle cx="216.2" cy="109.4" r="24.5" fill="url(#bmt2)"/><rect x="189.5" y="82.7" width="12.5" height="53.4" fill="#0b0e12" opacity=".8" clip-path="url(#bct2)"/><path d="M204.5 93.4 H209.8 L234.6 109.4 L209.8 125.4 H204.5 Z" fill="url(#bot2)"/><circle cx="211.7" cy="100.6" r="2.3" fill="#1a1410"/><circle cx="211.7" cy="109.4" r="2.3" fill="#1a1410"/><circle cx="211.7" cy="118.2" r="2.3" fill="#1a1410"/></svg>
<svg class="a" style="left:749px;top:533px;" width="245" height="138" viewBox="0 0 245 138"><g clip-path="url(#tc)"><rect width="245" height="138" fill="#a89c7c"/><g filter="url(#bl2)"><rect x="0" y="0" width="245" height="138" fill="#a89c7c"/><rect x="0" y="0" width="4.5" height="138" fill="#5a4c30" opacity="0.14"/><rect x="10" y="0" width="4.5" height="138" fill="#5a4c30" opacity="0.14"/><rect x="20" y="0" width="4.5" height="138" fill="#5a4c30" opacity="0.14"/><rect x="30" y="0" width="4.5" height="138" fill="#5a4c30" opacity="0.14"/><rect x="40" y="0" width="4.5" height="138" fill="#5a4c30" opacity="0.14"/><rect x="50" y="0" width="4.5" height="138" fill="#5a4c30" opacity="0.14"/><rect x="60" y="0" width="4.5" height="138" fill="#5a4c30" opacity="0.14"/><rect x="70" y="0" width="4.5" height="138" fill="#5a4c30" opacity="0.14"/><rect x="80" y="0" width="4.5" height="138" fill="#5a4c30" opacity="0.14"/><rect x="90" y="0" width="4.5" height="138" fill="#5a4c30" opacity="0.14"/><rect x="100" y="0" width="4.5" height="138" fill="#5a4c30" opacity="0.14"/><rect x="110" y="0" width="4.5" height="138" fill="#5a4c30" opacity="0.14"/><rect x="120" y="0" width="4.5" height="138" fill="#5a4c30" opacity="0.14"/><rect x="130" y="0" width="4.5" height="138" fill="#5a4c30" opacity="0.14"/><rect x="140" y="0" width="4.5" height="138" fill="#5a4c30" opacity="0.14"/><rect x="150" y="0" width="4.5" height="138" fill="#5a4c30" opacity="0.14"/><rect x="160" y="0" width="4.5" height="138" fill="#5a4c30" opacity="0.14"/><rect x="170" y="0" width="4.5" height="138" fill="#5a4c30" opacity="0.14"/><rect x="180" y="0" width="4.5" height="138" fill="#5a4c30" opacity="0.14"/><rect x="190" y="0" width="4.5" height="138" fill="#5a4c30" opacity="0.14"/><rect x="200" y="0" width="4.5" height="138" fill="#5a4c30" opacity="0.14"/><rect x="210" y="0" width="4.5" height="138" fill="#5a4c30" opacity="0.14"/><rect x="220" y="0" width="4.5" height="138" fill="#5a4c30" opacity="0.14"/><rect x="230" y="0" width="4.5" height="138" fill="#5a4c30" opacity="0.14"/><rect x="240" y="0" width="4.5" height="138" fill="#5a4c30" opacity="0.14"/><rect x="120" y="0" width="125" height="138" fill="#b2a686" opacity="0.5"/><rect x="0" y="0" width="245" height="12" fill="#8e8162"/><ellipse cx="122" cy="6" rx="30" ry="7" fill="#6a5a44"/><ellipse cx="142" cy="15" rx="10" ry="5" fill="#86765a"/><ellipse cx="112" cy="42" rx="11" ry="24" fill="#8a8160"/><ellipse cx="150" cy="30" rx="20" ry="10" fill="#9a9070"/><rect x="180" y="22" width="18" height="68" fill="#b9ad8a"/><rect x="178" y="22" width="3" height="80" fill="#82764f"/><rect x="197" y="22" width="3" height="80" fill="#82764f"/><rect x="180" y="40" width="18" height="3" fill="#82764f"/><rect x="180" y="60" width="18" height="3" fill="#82764f"/><ellipse cx="151" cy="60" rx="12" ry="11" fill="#dac488"/><ellipse cx="152.5" cy="65" rx="6.5" ry="8" fill="#9a7a58"/><polygon points="126,90 138,75 168,73 180,88 180,98 126,98" fill="#3e2e22"/><ellipse cx="143" cy="93" rx="24" ry="5.5" fill="#86664a"/><polygon points="114,97 186,97 192,138 110,138" fill="#30241a"/><rect x="112" y="109" width="80" height="5" fill="#8a7e60"/><ellipse cx="150" cy="126" rx="32" ry="8" fill="#4c402c"/><polygon points="30,84 34,58 46,42 64,36 98,52 104,92 92,122 52,126 40,104" fill="#a59c94"/><ellipse cx="82" cy="26" rx="21" ry="17" fill="#3e2c1e" transform="rotate(15 82 26)"/><ellipse cx="68" cy="52" rx="14" ry="32" fill="#402d1f" transform="rotate(16 68 52)"/><ellipse cx="93" cy="46" rx="9" ry="24" fill="#46321f"/><ellipse cx="84" cy="40" rx="10" ry="14" fill="#4c3826"/><polygon points="52,60 66,62 62,100 48,98" fill="#2a221c"/><ellipse cx="35" cy="90" rx="8" ry="24" fill="#a09088" transform="rotate(12 35 90)"/><ellipse cx="72" cy="104" rx="31" ry="17" fill="#84858a" transform="rotate(-14 72 104)"/><polygon points="98,96 136,88 137,93 100,104" fill="#66543f"/><ellipse cx="56" cy="108" rx="9" ry="8" fill="#94745a"/><ellipse cx="102" cy="97" rx="8" ry="6" fill="#94745a"/><polygon points="70,118 106,112 110,138 66,138" fill="#1e1814"/><polygon points="18,102 40,98 44,132 14,132" fill="#5c261c"/><rect x="0" y="127" width="112" height="11" fill="#34180f"/><polygon points="93,102 112,100 114,130 98,138" fill="#6a2418"/></g><rect width="245" height="138" fill="#4a2c08" opacity="0.1"/><g filter="url(#bl1)"><circle cx="10" cy="8" r="1.5" fill="#ece2bc"/><circle cx="22" cy="14" r="1.5" fill="#ece2bc"/><circle cx="34" cy="8" r="1.5" fill="#ece2bc"/><circle cx="46" cy="16" r="1.5" fill="#ece2bc"/><circle cx="60" cy="8" r="1.5" fill="#ece2bc"/><circle cx="106" cy="30" r="1.5" fill="#ece2bc"/><circle cx="118" cy="38" r="1.5" fill="#ece2bc"/><circle cx="130" cy="34" r="1.5" fill="#ece2bc"/><circle cx="140" cy="44" r="1.5" fill="#ece2bc"/><circle cx="160" cy="20" r="1.5" fill="#ece2bc"/><circle cx="172" cy="14" r="1.5" fill="#ece2bc"/><circle cx="186" cy="30" r="1.5" fill="#ece2bc"/><circle cx="192" cy="50" r="1.5" fill="#ece2bc"/><circle cx="188" cy="70" r="1.5" fill="#ece2bc"/><circle cx="206" cy="12" r="1.5" fill="#ece2bc"/><circle cx="218" cy="20" r="1.5" fill="#ece2bc"/><circle cx="230" cy="10" r="1.5" fill="#ece2bc"/><circle cx="236" cy="22" r="1.5" fill="#ece2bc"/><circle cx="120" cy="112" r="1.5" fill="#ece2bc"/><circle cx="136" cy="118" r="1.5" fill="#ece2bc"/><circle cx="150" cy="112" r="1.5" fill="#ece2bc"/><circle cx="166" cy="120" r="1.5" fill="#ece2bc"/><circle cx="180" cy="114" r="1.5" fill="#ece2bc"/><circle cx="128" cy="130" r="1.5" fill="#ece2bc"/><circle cx="160" cy="132" r="1.5" fill="#ece2bc"/></g><rect x="0" y="135.5" width="245" height="2.5" fill="#0c0806"/><rect x="0" y="0" width="245" height="138" fill="none" stroke="#3a2c1c" stroke-width="1.5" opacity=".55"/></g><defs><linearGradient id="bmt3" x1="0" y1="0" x2="0" y2="1"><stop offset="0" stop-color="#474c54"/><stop offset="1" stop-color="#2b2e34"/></linearGradient><linearGradient id="bot3" x1="0" x2="1" y1="1" y2="0"><stop offset="0" stop-color="#e08a2c"/><stop offset="0.6" stop-color="#f4aa48"/><stop offset="1" stop-color="#f6b252"/></linearGradient><clipPath id="bct3"><circle cx="216.2" cy="109.4" r="24.5"/></clipPath></defs><circle cx="216.2" cy="109.4" r="26.7" fill="#a9aba8"/><circle cx="216.2" cy="109.4" r="24.5" fill="url(#bmt3)"/><rect x="189.5" y="82.7" width="12.5" height="53.4" fill="#0b0e12" opacity=".8" clip-path="url(#bct3)"/><path d="M204.5 93.4 H209.8 L234.6 109.4 L209.8 125.4 H204.5 Z" fill="url(#bot3)"/><circle cx="211.7" cy="100.6" r="2.3" fill="#1a1410"/><circle cx="211.7" cy="109.4" r="2.3" fill="#1a1410"/><circle cx="211.7" cy="118.2" r="2.3" fill="#1a1410"/></svg>
<svg class="a" style="left:1074px;top:533px;" width="245" height="138" viewBox="0 0 245 138"><g clip-path="url(#tc)"><rect width="245" height="138" fill="#b2a78a"/><g filter="url(#bl2)"><rect x="0" y="0" width="245" height="138" fill="#b2a78a"/><rect x="0" y="0" width="4.05" height="70" fill="#5a4c30" opacity="0.13"/><rect x="9" y="0" width="4.05" height="70" fill="#5a4c30" opacity="0.13"/><rect x="18" y="0" width="4.05" height="70" fill="#5a4c30" opacity="0.13"/><rect x="27" y="0" width="4.05" height="70" fill="#5a4c30" opacity="0.13"/><rect x="36" y="0" width="4.05" height="70" fill="#5a4c30" opacity="0.13"/><rect x="45" y="0" width="4.05" height="70" fill="#5a4c30" opacity="0.13"/><rect x="54" y="0" width="4.05" height="70" fill="#5a4c30" opacity="0.13"/><rect x="63" y="0" width="4.05" height="70" fill="#5a4c30" opacity="0.13"/><rect x="72" y="0" width="4.05" height="70" fill="#5a4c30" opacity="0.13"/><rect x="81" y="0" width="4.05" height="70" fill="#5a4c30" opacity="0.13"/><rect x="90" y="0" width="4.05" height="70" fill="#5a4c30" opacity="0.13"/><rect x="99" y="0" width="4.05" height="70" fill="#5a4c30" opacity="0.13"/><rect x="108" y="0" width="4.05" height="70" fill="#5a4c30" opacity="0.13"/><rect x="117" y="0" width="4.05" height="70" fill="#5a4c30" opacity="0.13"/><rect x="126" y="0" width="4.05" height="70" fill="#5a4c30" opacity="0.13"/><rect x="135" y="0" width="4.05" height="70" fill="#5a4c30" opacity="0.13"/><rect x="144" y="0" width="4.05" height="70" fill="#5a4c30" opacity="0.13"/><rect x="153" y="0" width="4.05" height="70" fill="#5a4c30" opacity="0.13"/><rect x="162" y="0" width="4.05" height="70" fill="#5a4c30" opacity="0.13"/><rect x="171" y="0" width="4.05" height="70" fill="#5a4c30" opacity="0.13"/><rect x="180" y="0" width="4.05" height="70" fill="#5a4c30" opacity="0.13"/><rect x="189" y="0" width="4.05" height="70" fill="#5a4c30" opacity="0.13"/><rect x="198" y="0" width="4.05" height="70" fill="#5a4c30" opacity="0.13"/><rect x="207" y="0" width="4.05" height="70" fill="#5a4c30" opacity="0.13"/><rect x="216" y="0" width="4.05" height="70" fill="#5a4c30" opacity="0.13"/><rect x="225" y="0" width="4.05" height="70" fill="#5a4c30" opacity="0.13"/><rect x="234" y="0" width="4.05" height="70" fill="#5a4c30" opacity="0.13"/><rect x="243" y="0" width="4.05" height="70" fill="#5a4c30" opacity="0.13"/><rect x="0" y="0" width="245" height="7" fill="#958a68"/><rect x="0" y="64" width="245" height="74" fill="#463627"/><rect x="0" y="104" width="245" height="34" fill="#54432e"/><rect x="2" y="33" width="47" height="13" fill="#5a4630"/><rect x="13" y="22" width="23" height="12" fill="#4a3a2a"/><rect x="17" y="25" width="15" height="8" fill="#8a7e64"/><rect x="0" y="45" width="48" height="28" fill="#2c1d15"/><rect x="0" y="72" width="38" height="66" fill="#48372a"/><polygon points="34,67 104,64 106,99 34,101" fill="#4a2020"/><ellipse cx="90" cy="82" rx="14" ry="15" fill="#54242a"/><ellipse cx="67" cy="24" rx="9" ry="13" fill="#3a2a1e"/><ellipse cx="62" cy="42" rx="7" ry="14" fill="#3a2a1e"/><ellipse cx="73" cy="40" rx="5" ry="12" fill="#3a2a1e"/><polygon points="48,46 58,35 76,35 82,48 80,74 50,74" fill="#7f796d"/><polygon points="60,42 73,42 75,62 62,64" fill="#352d26"/><ellipse cx="65" cy="66" rx="15" ry="7" fill="#6a7080" transform="rotate(-8 65 66)"/><polygon points="62,74 82,72 81,121 64,121" fill="#2a2018"/><polygon points="76,60 100,46 101,49 78,66" fill="#7a6a54"/><ellipse cx="119" cy="21" rx="8.5" ry="12" fill="#38281e"/><ellipse cx="121" cy="24" rx="4" ry="6" fill="#94745a"/><polygon points="99,133 105,48 116,33 134,38 146,110 142,133" fill="#a09480"/><polygon points="112,48 130,48 132,136 110,136" fill="#5a5044"/><ellipse cx="147" cy="25" rx="6.5" ry="13" fill="#66603e"/><ellipse cx="161" cy="46" rx="4.5" ry="5" fill="#86664a"/><polygon points="146,52 175,50 178,68 144,68" fill="#33281e"/><polygon points="141,64 184,63 186,112 142,112" fill="#2e241c"/><ellipse cx="152" cy="72" rx="11" ry="2.5" fill="#8a7a58"/><ellipse cx="172" cy="92" rx="10" ry="8" fill="#4a4034"/><ellipse cx="194" cy="35" rx="13" ry="11" fill="#cdbd8c"/><ellipse cx="194" cy="34" rx="6" ry="5.5" fill="#ecd68c"/><rect x="193" y="40" width="2.5" height="20" fill="#7a6440"/><ellipse cx="186" cy="58" rx="5" ry="3.5" fill="#dccc9c"/><rect x="184" y="58" width="23" height="34" fill="#664630"/><polygon points="210,72 245,69 245,94 211,94" fill="#4a2220"/><rect x="213" y="2" width="7" height="66" fill="#b9ad88"/></g><rect width="245" height="138" fill="#4a2c08" opacity="0.1"/><g filter="url(#bl1)"><ellipse cx="10" cy="38" rx="2" ry="3.5" fill="#eee4c8"/><ellipse cx="7" cy="62" rx="2" ry="3.5" fill="#e6dcc0"/><ellipse cx="36" cy="62" rx="2" ry="3.5" fill="#e6dcc0"/><ellipse cx="26.5" cy="82" rx="3.5" ry="6" fill="#ece2c6"/><ellipse cx="26" cy="128" rx="5" ry="8" fill="#ece2c6"/><ellipse cx="137" cy="59" rx="2.5" ry="2.5" fill="#eee4c8"/><circle cx="20" cy="6" r="1.2" fill="#e6dcb6"/><circle cx="40" cy="10" r="1.2" fill="#e6dcb6"/><circle cx="60" cy="6" r="1.2" fill="#e6dcb6"/><circle cx="84" cy="10" r="1.2" fill="#e6dcb6"/><circle cx="100" cy="6" r="1.2" fill="#e6dcb6"/><circle cx="150" cy="8" r="1.2" fill="#e6dcb6"/><circle cx="170" cy="12" r="1.2" fill="#e6dcb6"/><circle cx="184" cy="8" r="1.2" fill="#e6dcb6"/><circle cx="200" cy="14" r="1.2" fill="#e6dcb6"/><circle cx="222" cy="20" r="1.2" fill="#e6dcb6"/><circle cx="224" cy="40" r="1.2" fill="#e6dcb6"/><circle cx="220" cy="56" r="1.2" fill="#e6dcb6"/><circle cx="14" cy="110" r="1.2" fill="#e6dcb6"/><circle cx="46" cy="116" r="1.2" fill="#e6dcb6"/><circle cx="92" cy="112" r="1.2" fill="#e6dcb6"/><circle cx="156" cy="118" r="1.2" fill="#e6dcb6"/><circle cx="60" cy="90" r="1.2" fill="#e6dcb6"/><circle cx="82" cy="86" r="1.2" fill="#e6dcb6"/><circle cx="150" cy="96" r="1.2" fill="#e6dcb6"/><circle cx="176" cy="104" r="1.2" fill="#e6dcb6"/></g><rect x="0" y="135.5" width="245" height="2.5" fill="#0c0806"/><rect x="0" y="0" width="245" height="138" fill="none" stroke="#3a2c1c" stroke-width="1.5" opacity=".55"/></g><defs><linearGradient id="bmt4" x1="0" y1="0" x2="0" y2="1"><stop offset="0" stop-color="#474c54"/><stop offset="1" stop-color="#2b2e34"/></linearGradient><linearGradient id="bot4" x1="0" x2="1" y1="1" y2="0"><stop offset="0" stop-color="#e08a2c"/><stop offset="0.6" stop-color="#f4aa48"/><stop offset="1" stop-color="#f6b252"/></linearGradient><clipPath id="bct4"><circle cx="216.2" cy="109.4" r="24.5"/></clipPath></defs><circle cx="216.2" cy="109.4" r="26.7" fill="#a9aba8"/><circle cx="216.2" cy="109.4" r="24.5" fill="url(#bmt4)"/><rect x="189.5" y="82.7" width="12.5" height="53.4" fill="#0b0e12" opacity=".8" clip-path="url(#bct4)"/><path d="M204.5 93.4 H209.8 L234.6 109.4 L209.8 125.4 H204.5 Z" fill="url(#bot4)"/><circle cx="211.7" cy="100.6" r="2.3" fill="#1a1410"/><circle cx="211.7" cy="109.4" r="2.3" fill="#1a1410"/><circle cx="211.7" cy="118.2" r="2.3" fill="#1a1410"/></svg>
<svg class="a" style="left:99px;top:872px;" width="245" height="138" viewBox="0 0 245 138"><g clip-path="url(#tc)"><rect width="245" height="138" fill="#a3947a"/><g filter="url(#bl2)"><rect x="0" y="0" width="245" height="138" fill="#a3947a"/><rect x="0" y="0" width="75" height="138" fill="#9a8c72"/><rect x="150" y="0" width="95" height="138" fill="#a8997e"/><rect x="0" y="0" width="6.3" height="138" fill="#5a4c30" opacity="0.1"/><rect x="14" y="0" width="6.3" height="138" fill="#5a4c30" opacity="0.1"/><rect x="28" y="0" width="6.3" height="138" fill="#5a4c30" opacity="0.1"/><rect x="42" y="0" width="6.3" height="138" fill="#5a4c30" opacity="0.1"/><rect x="56" y="0" width="6.3" height="138" fill="#5a4c30" opacity="0.1"/><rect x="70" y="0" width="6.3" height="138" fill="#5a4c30" opacity="0.1"/><rect x="84" y="0" width="6.3" height="138" fill="#5a4c30" opacity="0.1"/><rect x="98" y="0" width="6.3" height="138" fill="#5a4c30" opacity="0.1"/><rect x="112" y="0" width="6.3" height="138" fill="#5a4c30" opacity="0.1"/><rect x="126" y="0" width="6.3" height="138" fill="#5a4c30" opacity="0.1"/><rect x="140" y="0" width="6.3" height="138" fill="#5a4c30" opacity="0.1"/><rect x="154" y="0" width="6.3" height="138" fill="#5a4c30" opacity="0.1"/><rect x="168" y="0" width="6.3" height="138" fill="#5a4c30" opacity="0.1"/><rect x="182" y="0" width="6.3" height="138" fill="#5a4c30" opacity="0.1"/><rect x="196" y="0" width="6.3" height="138" fill="#5a4c30" opacity="0.1"/><rect x="210" y="0" width="6.3" height="138" fill="#5a4c30" opacity="0.1"/><rect x="224" y="0" width="6.3" height="138" fill="#5a4c30" opacity="0.1"/><rect x="238" y="0" width="6.3" height="138" fill="#5a4c30" opacity="0.1"/><rect x="0" y="0" width="245" height="4" fill="#5a4a34"/><ellipse cx="28" cy="28" rx="11" ry="15" fill="#8c8662"/><ellipse cx="56" cy="40" rx="9" ry="13" fill="#8c8662"/><ellipse cx="226" cy="30" rx="8" ry="30" fill="#948a66"/><ellipse cx="112" cy="42" rx="33" ry="37" fill="#2f2118"/><ellipse cx="88" cy="80" rx="15" ry="33" fill="#2f2118"/><ellipse cx="134" cy="78" rx="18" ry="37" fill="#33241a"/><ellipse cx="148" cy="62" rx="11" ry="25" fill="#574230"/><ellipse cx="102" cy="50" rx="16" ry="27" fill="#95725a"/><ellipse cx="94" cy="46" rx="8" ry="22" fill="#70503c"/><ellipse cx="96" cy="33" rx="12" ry="8" fill="#7a5a44"/><ellipse cx="104" cy="65" rx="7" ry="3.5" fill="#dccdbd"/><ellipse cx="103.5" cy="77" rx="6.5" ry="8" fill="#8a8a84"/><rect x="101" y="83" width="7" height="55" fill="#2e261f"/><polygon points="5,66 10,58 14,72 19,56 24,70 31,58 34,76 37,100 12,102" fill="#8a6a50"/><ellipse cx="23" cy="92" rx="14" ry="16" fill="#82624a"/><polygon points="0,138 2,104 38,92 76,94 98,112 128,96 164,82 188,92 194,138" fill="#6e5e4c"/><ellipse cx="40" cy="118" rx="32" ry="15" fill="#84745e"/><ellipse cx="158" cy="110" rx="27" ry="22" fill="#8a7a62"/><ellipse cx="110" cy="128" rx="20" ry="14" fill="#43352b"/><ellipse cx="78" cy="110" rx="14" ry="10" fill="#54463a"/><ellipse cx="20" cy="126" rx="16" ry="10" fill="#5a4c3e"/></g><rect width="245" height="138" fill="#4a2c08" opacity="0.06"/><g filter="url(#bl1)"><circle cx="1" cy="6" r="1.9" fill="#f2eacc"/><circle cx="26" cy="4" r="1.9" fill="#f2eacc"/><circle cx="30" cy="12" r="1.9" fill="#f2eacc"/><circle cx="34" cy="20" r="1.9" fill="#f2eacc"/><circle cx="40" cy="26" r="1.9" fill="#f2eacc"/><circle cx="42" cy="34" r="1.9" fill="#f2eacc"/><circle cx="52" cy="42" r="1.9" fill="#f2eacc"/><circle cx="58" cy="48" r="1.9" fill="#f2eacc"/><circle cx="66" cy="50" r="1.9" fill="#f2eacc"/><circle cx="74" cy="52" r="1.9" fill="#f2eacc"/><circle cx="140" cy="20" r="1.9" fill="#f2eacc"/><circle cx="146" cy="28" r="1.9" fill="#f2eacc"/><circle cx="150" cy="36" r="1.9" fill="#f2eacc"/><circle cx="158" cy="44" r="1.9" fill="#f2eacc"/><circle cx="166" cy="52" r="1.9" fill="#f2eacc"/><circle cx="176" cy="52" r="1.9" fill="#f2eacc"/><circle cx="186" cy="48" r="1.9" fill="#f2eacc"/><circle cx="196" cy="44" r="1.9" fill="#f2eacc"/><circle cx="208" cy="40" r="1.9" fill="#f2eacc"/><circle cx="218" cy="30" r="1.9" fill="#f2eacc"/><circle cx="228" cy="22" r="1.9" fill="#f2eacc"/><circle cx="240" cy="20" r="1.9" fill="#f2eacc"/><circle cx="240" cy="30" r="1.9" fill="#f2eacc"/></g><rect x="0" y="135.5" width="245" height="2.5" fill="#0c0806"/><rect x="0" y="0" width="245" height="138" fill="none" stroke="#3a2c1c" stroke-width="1.5" opacity=".55"/></g><defs><linearGradient id="bmt5" x1="0" y1="0" x2="0" y2="1"><stop offset="0" stop-color="#474c54"/><stop offset="1" stop-color="#2b2e34"/></linearGradient><linearGradient id="bot5" x1="0" x2="1" y1="1" y2="0"><stop offset="0" stop-color="#e08a2c"/><stop offset="0.6" stop-color="#f4aa48"/><stop offset="1" stop-color="#f6b252"/></linearGradient><clipPath id="bct5"><circle cx="216.2" cy="109.4" r="24.5"/></clipPath></defs><circle cx="216.2" cy="109.4" r="26.7" fill="#a9aba8"/><circle cx="216.2" cy="109.4" r="24.5" fill="url(#bmt5)"/><rect x="189.5" y="82.7" width="12.5" height="53.4" fill="#0b0e12" opacity=".8" clip-path="url(#bct5)"/><path d="M204.5 93.4 H209.8 L234.6 109.4 L209.8 125.4 H204.5 Z" fill="url(#bot5)"/><circle cx="211.7" cy="100.6" r="2.3" fill="#1a1410"/><circle cx="211.7" cy="109.4" r="2.3" fill="#1a1410"/><circle cx="211.7" cy="118.2" r="2.3" fill="#1a1410"/></svg>
<svg class="a" style="left:424px;top:872px;" width="245" height="138" viewBox="0 0 245 138"><g clip-path="url(#tc)"><rect width="245" height="138" fill="#aa9f84"/><g filter="url(#bl2)"><rect x="0" y="0" width="245" height="138" fill="#b0a58a"/><rect x="0" y="0" width="70" height="138" fill="#aca596"/><rect x="150" y="40" width="95" height="98" fill="#baac8a"/><rect x="150" y="40" width="5.4" height="98" fill="#5a4c30" opacity="0.1"/><rect x="162" y="40" width="5.4" height="98" fill="#5a4c30" opacity="0.1"/><rect x="174" y="40" width="5.4" height="98" fill="#5a4c30" opacity="0.1"/><rect x="186" y="40" width="5.4" height="98" fill="#5a4c30" opacity="0.1"/><rect x="198" y="40" width="5.4" height="98" fill="#5a4c30" opacity="0.1"/><rect x="210" y="40" width="5.4" height="98" fill="#5a4c30" opacity="0.1"/><rect x="222" y="40" width="5.4" height="98" fill="#5a4c30" opacity="0.1"/><rect x="234" y="40" width="5.4" height="98" fill="#5a4c30" opacity="0.1"/><rect x="0" y="0" width="245" height="6" fill="#7a6a4c"/><polygon points="128,0 150,8 186,30 192,44 176,42 140,30 120,16" fill="#86765a"/><ellipse cx="182" cy="40" rx="8" ry="8" fill="#6e5e46"/><ellipse cx="42" cy="52" rx="10" ry="14" fill="#868660"/><ellipse cx="56" cy="66" rx="8" ry="10" fill="#868660"/><ellipse cx="228" cy="70" rx="10" ry="30" fill="#8a7e5a"/><ellipse cx="192" cy="108" rx="18" ry="22" fill="#e6d294"/><ellipse cx="196" cy="128" rx="20" ry="12" fill="#d8c890"/><ellipse cx="96" cy="40" rx="29" ry="42" fill="#3c2a1d"/><ellipse cx="80" cy="74" rx="20" ry="30" fill="#3c2a1d"/><ellipse cx="112" cy="70" rx="14" ry="26" fill="#3a2819"/><ellipse cx="122" cy="32" rx="8.5" ry="17" fill="#6e4f3a"/><ellipse cx="127" cy="36" rx="3.5" ry="10" fill="#8a6a50"/><ellipse cx="125" cy="50" rx="6" ry="8" fill="#64463a"/><polygon points="10,138 14,110 30,88 62,78 66,138" fill="#a8a09c"/><polygon points="56,84 100,78 116,138 54,138" fill="#241e1a"/><polygon points="96,88 128,82 140,138 108,138" fill="#a09890"/><polygon points="124,86 142,92 160,138 134,138" fill="#3a3028"/><ellipse cx="112" cy="98" rx="6" ry="10" fill="#2a201a"/></g><rect width="245" height="138" fill="#4a2c08" opacity="0.1"/><g filter="url(#bl1)"><circle cx="2" cy="46" r="1.8" fill="#f2eacc"/><circle cx="10" cy="40" r="1.8" fill="#f2eacc"/><circle cx="18" cy="30" r="1.8" fill="#f2eacc"/><circle cx="24" cy="20" r="1.8" fill="#f2eacc"/><circle cx="30" cy="10" r="1.8" fill="#f2eacc"/><circle cx="38" cy="8" r="1.8" fill="#f2eacc"/><circle cx="36" cy="18" r="1.8" fill="#f2eacc"/><circle cx="44" cy="22" r="1.8" fill="#f2eacc"/><circle cx="46" cy="34" r="1.8" fill="#f2eacc"/><circle cx="50" cy="44" r="1.8" fill="#f2eacc"/><circle cx="56" cy="48" r="1.8" fill="#f2eacc"/><circle cx="136" cy="70" r="1.8" fill="#f2eacc"/><circle cx="144" cy="66" r="1.8" fill="#f2eacc"/><circle cx="152" cy="62" r="1.8" fill="#f2eacc"/><circle cx="160" cy="56" r="1.8" fill="#f2eacc"/><circle cx="170" cy="60" r="1.8" fill="#f2eacc"/><circle cx="180" cy="64" r="1.8" fill="#f2eacc"/><circle cx="190" cy="62" r="1.8" fill="#f2eacc"/><circle cx="202" cy="58" r="1.8" fill="#f2eacc"/><circle cx="214" cy="56" r="1.8" fill="#f2eacc"/><circle cx="226" cy="54" r="1.8" fill="#f2eacc"/><circle cx="238" cy="50" r="1.8" fill="#f2eacc"/><circle cx="208" cy="32" r="1.8" fill="#f2eacc"/><circle cx="206" cy="46" r="1.8" fill="#f2eacc"/><circle cx="216" cy="66" r="1.8" fill="#f2eacc"/></g><rect x="0" y="135.5" width="245" height="2.5" fill="#0c0806"/><rect x="0" y="0" width="245" height="138" fill="none" stroke="#3a2c1c" stroke-width="1.5" opacity=".55"/></g><defs><linearGradient id="bmt6" x1="0" y1="0" x2="0" y2="1"><stop offset="0" stop-color="#474c54"/><stop offset="1" stop-color="#2b2e34"/></linearGradient><linearGradient id="bot6" x1="0" x2="1" y1="1" y2="0"><stop offset="0" stop-color="#e08a2c"/><stop offset="0.6" stop-color="#f4aa48"/><stop offset="1" stop-color="#f6b252"/></linearGradient><clipPath id="bct6"><circle cx="216.2" cy="109.4" r="24.5"/></clipPath></defs><circle cx="216.2" cy="109.4" r="26.7" fill="#a9aba8"/><circle cx="216.2" cy="109.4" r="24.5" fill="url(#bmt6)"/><rect x="189.5" y="82.7" width="12.5" height="53.4" fill="#0b0e12" opacity=".8" clip-path="url(#bct6)"/><path d="M204.5 93.4 H209.8 L234.6 109.4 L209.8 125.4 H204.5 Z" fill="url(#bot6)"/><circle cx="211.7" cy="100.6" r="2.3" fill="#1a1410"/><circle cx="211.7" cy="109.4" r="2.3" fill="#1a1410"/><circle cx="211.7" cy="118.2" r="2.3" fill="#1a1410"/></svg>
<svg class="a" style="left:1456.5px;top:661px;" width="245" height="138" viewBox="0 0 245 138"><g clip-path="url(#tc)"><rect width="245" height="138" fill="#8e7c56"/><g filter="url(#bl2)"><rect x="0" y="0" width="245" height="138" fill="#8a764e"/><rect x="50" y="0" width="170" height="62" fill="#b09c74"/><rect x="96" y="0" width="112" height="40" fill="#b8a47a"/><rect x="140" y="4" width="16" height="36" fill="#c6b288"/><rect x="55" y="0" width="4.95" height="70" fill="#5a4a2c" opacity="0.2"/><rect x="66" y="0" width="4.95" height="70" fill="#5a4a2c" opacity="0.2"/><rect x="77" y="0" width="4.95" height="70" fill="#5a4a2c" opacity="0.2"/><rect x="88" y="0" width="4.95" height="70" fill="#5a4a2c" opacity="0.2"/><rect x="99" y="0" width="4.95" height="70" fill="#5a4a2c" opacity="0.2"/><rect x="110" y="0" width="4.95" height="70" fill="#5a4a2c" opacity="0.2"/><rect x="121" y="0" width="4.95" height="70" fill="#5a4a2c" opacity="0.2"/><rect x="132" y="0" width="4.95" height="70" fill="#5a4a2c" opacity="0.2"/><rect x="143" y="0" width="4.95" height="70" fill="#5a4a2c" opacity="0.2"/><rect x="154" y="0" width="4.95" height="70" fill="#5a4a2c" opacity="0.2"/><rect x="165" y="0" width="4.95" height="70" fill="#5a4a2c" opacity="0.2"/><rect x="176" y="0" width="4.95" height="70" fill="#5a4a2c" opacity="0.2"/><rect x="187" y="0" width="4.95" height="70" fill="#5a4a2c" opacity="0.2"/><rect x="198" y="0" width="4.95" height="70" fill="#5a4a2c" opacity="0.2"/><rect x="209" y="0" width="4.95" height="70" fill="#5a4a2c" opacity="0.2"/><rect x="0" y="0" width="56" height="138" fill="#75643f"/><ellipse cx="28" cy="28" rx="20" ry="24" fill="#554a28"/><ellipse cx="40" cy="56" rx="12" ry="18" fill="#5c4f2c"/><ellipse cx="8" cy="70" rx="10" ry="30" fill="#584830"/><ellipse cx="30" cy="70" rx="10" ry="14" fill="#8a7650"/><rect x="213" y="0" width="32" height="75" fill="#8a7850"/><ellipse cx="226" cy="38" rx="12" ry="10" fill="#a89a6c"/><rect x="186" y="70" width="59" height="68" fill="#a08a62"/><rect x="122" y="70" width="58" height="68" fill="#c8b48c"/><ellipse cx="146" cy="100" rx="22" ry="28" fill="#d8c69c"/><ellipse cx="178" cy="50" rx="76" ry="21" fill="#5e4628" transform="rotate(-5 178 50)"/><ellipse cx="172" cy="42" rx="60" ry="9" fill="#77603c" transform="rotate(-5 172 42)"/><ellipse cx="186" cy="63" rx="60" ry="8" fill="#4a3420" transform="rotate(-3 186 63)"/><rect x="176" y="60" width="6" height="78" fill="#2e2218"/><rect x="171" y="72" width="15" height="15" fill="#32261c"/><rect x="149" y="74" width="5" height="36" fill="#5e4828"/><ellipse cx="151" cy="92" rx="6" ry="5" fill="#6e5630"/><rect x="158" y="104" width="28" height="30" fill="#35261a"/><ellipse cx="150" cy="113" rx="8" ry="8" fill="#f0e2b6"/><ellipse cx="141" cy="120" rx="5" ry="5" fill="#e8d8a8"/><ellipse cx="176" cy="125" rx="4" ry="4" fill="#e8dcc0"/><ellipse cx="92" cy="25" rx="17.5" ry="25" fill="#5e422e"/><ellipse cx="84" cy="13" rx="14" ry="12" fill="#49331f"/><ellipse cx="100" cy="30" rx="9" ry="16" fill="#75563c"/><ellipse cx="80" cy="32" rx="7" ry="14" fill="#422e1e"/><polygon points="3,138 6,92 22,68 60,46 78,56 96,66 122,78 128,104 120,138" fill="#261b14"/><polygon points="78,56 88,50 100,64 86,80" fill="#553826"/><ellipse cx="52" cy="124" rx="46" ry="9" fill="#4c3120" transform="rotate(4 52 124)"/><ellipse cx="98" cy="118" rx="16" ry="8" fill="#5e3e28" transform="rotate(-20 98 118)"/><rect x="84" y="125" width="84" height="3.5" fill="#7a6242"/><rect x="0" y="128" width="245" height="10" fill="#20140a" opacity="0.85"/></g><rect width="245" height="138" fill="#4a2c08" opacity="0.1"/><g filter="url(#bl1)"><circle cx="62" cy="6" r="1.8" fill="#e8dcb0"/><circle cx="75" cy="9" r="1.8" fill="#e8dcb0"/><circle cx="212" cy="12" r="1.8" fill="#e8dcb0"/><circle cx="222" cy="20" r="1.8" fill="#e8dcb0"/><circle cx="228" cy="8" r="1.8" fill="#e8dcb0"/><circle cx="216" cy="30" r="1.8" fill="#e8dcb0"/><circle cx="232" cy="34" r="1.8" fill="#e8dcb0"/><circle cx="218" cy="72" r="1.8" fill="#e8dcb0"/><circle cx="226" cy="84" r="1.8" fill="#e8dcb0"/></g><rect x="0" y="135.5" width="245" height="2.5" fill="#0c0806"/><rect x="0" y="0" width="245" height="138" fill="none" stroke="#3a2c1c" stroke-width="1.5" opacity=".55"/></g><defs><linearGradient id="bmt7" x1="0" y1="0" x2="0" y2="1"><stop offset="0" stop-color="#474c54"/><stop offset="1" stop-color="#2b2e34"/></linearGradient><linearGradient id="bot7" x1="0" x2="1" y1="1" y2="0"><stop offset="0" stop-color="#e08a2c"/><stop offset="0.6" stop-color="#f4aa48"/><stop offset="1" stop-color="#f6b252"/></linearGradient><clipPath id="bct7"><circle cx="216.2" cy="109.4" r="24.5"/></clipPath></defs><circle cx="216.2" cy="109.4" r="26.7" fill="#a9aba8"/><circle cx="216.2" cy="109.4" r="24.5" fill="url(#bmt7)"/><rect x="189.5" y="82.7" width="12.5" height="53.4" fill="#0b0e12" opacity=".8" clip-path="url(#bct7)"/><path d="M204.5 93.4 H209.8 L234.6 109.4 L209.8 125.4 H204.5 Z" fill="url(#bot7)"/><circle cx="211.7" cy="100.6" r="2.3" fill="#1a1410"/><circle cx="211.7" cy="109.4" r="2.3" fill="#1a1410"/><circle cx="211.7" cy="118.2" r="2.3" fill="#1a1410"/></svg>
<svg class="a" style="left:760px;top:765px;" width="220" height="245" viewBox="0 0 220 245"><defs><linearGradient id="vo" x1="0" x2="1"><stop offset="0" stop-color="#f7a03a"/><stop offset="0.28" stop-color="#f08a24"/><stop offset="0.62" stop-color="#e87818"/><stop offset="1" stop-color="#ee8a2a"/></linearGradient><linearGradient id="vw" x1="0" x2="1"><stop offset="0" stop-color="#f4f4f4"/><stop offset="0.5" stop-color="#dcdcdc"/><stop offset="1" stop-color="#cfcfcf"/></linearGradient><linearGradient id="vb" x1="0" y1="0" x2="0" y2="1"><stop offset="0" stop-color="#f6a23c"/><stop offset="0.85" stop-color="#f29a2c"/><stop offset="1" stop-color="#d8761a"/></linearGradient><pattern id="vp" width="3.2" height="3.2" patternUnits="userSpaceOnUse"><circle cx="1.6" cy="1.6" r="0.8" fill="#b8b8b8"/></pattern></defs><path d="M34 153 Q32 153 31 156 L6 232 Q5 240 12 240 H208 Q215 240 214 232 L191 156 Q190 153 188 153 Z" fill="url(#vb)"/><path d="M6.5 233 Q5 240 12 240 H208 Q215 240 213.5 233 Z" fill="#d06f16"/><path d="M40 186 Q36 212 112 218 Q188 212 184 186 Q178 204 112 208 Q46 204 40 186Z" fill="#f6aa4a" opacity=".65"/><clipPath id="vcl"><path d="M95 12 Q97 4 112.5 4 Q128 4 130 12 L171 172 Q178 190 168 197 Q112 218 56 197 Q46 190 52 172 Z"/></clipPath><path d="M95 12 Q97 4 112.5 4 Q128 4 130 12 L171 172 Q178 190 168 197 Q112 218 56 197 Q46 190 52 172 Z" fill="url(#vo)"/><g clip-path="url(#vcl)"><path d="M80 38.4 Q111 50.6 142 38.4 L152 73.5 Q111 97.7 70 73.5 Z" fill="url(#vw)"/><path d="M80 38.4 Q111 50.6 142 38.4 L152 73.5 Q111 97.7 70 73.5 Z" fill="url(#vp)"/><path d="M58 122 Q112 148.6 166 122 L176 169.2 Q112 198.2 46 169.2 Z" fill="url(#vw)"/><path d="M58 122 Q112 148.6 166 122 L176 169.2 Q112 198.2 46 169.2 Z" fill="url(#vp)"/></g><path d="M103 9 Q106 6 110 6 L86 196 Q70 192 62 184 Z" fill="#fff" opacity=".12"/></svg>
<div class="a" style="left:1394px;top:512px;width:1.5px;height:608px;background:#ececec;"></div>
<span class="t" style="left:1457.6px;top:537.9px;font-size:40.5px;color:#111;transform:scaleX(0.9848);-webkit-text-stroke:0;">A003_06240347_C001.braw</span>
<span class="t" style="left:1455.6px;top:605.0px;font-size:27.5px;color:#27365a;transform:scaleX(0.9872);">Blackmagic Raw Clip</span>
<span class="t" style="left:1455.5px;top:832.1px;font-size:28px;color:#5c6272;transform:scaleX(0.9969);">Date modifie...</span>
<span class="t" style="left:1662.1px;top:832.1px;font-size:28px;color:#27365a;transform:scaleX(0.9608);">12-Aug-19 1:13</span>
<span class="t" style="left:1456.7px;top:878.7px;font-size:28px;color:#5c6272;transform:scaleX(0.8492);">Size:</span>
<span class="t" style="left:1663.1px;top:878.7px;font-size:28px;color:#27365a;transform:scaleX(0.8728);">2.25 GB</span>
<span class="t" style="left:1455.6px;top:924.6px;font-size:28px;color:#5c6272;transform:scaleX(0.9561);">Date created:</span>
<span class="t" style="left:1663.1px;top:924.6px;font-size:28px;color:#27365a;transform:scaleX(0.9478);">25-Apr-21 10:13</span>
<span class="t" style="left:90.0px;top:1135.8px;font-size:28px;color:#27365a;transform:scaleX(0.9723);">7 items</span>
<span class="t" style="left:230.8px;top:1135.8px;font-size:28px;color:#27365a;transform:scaleX(0.9705);">1 item selected</span>
<span class="t" style="left:427.1px;top:1135.8px;font-size:28px;color:#27365a;transform:scaleX(0.8866);">2.25 GB</span>
<div class="a" style="left:204px;top:1136px;width:1.5px;height:26px;background:#eeeeee;"></div>
<div class="a" style="left:545px;top:1136px;width:1.5px;height:26px;background:#eeeeee;"></div>
<div class="a" style="left:2048px;top:1120px;width:44px;height:58.5px;background:#cce4f7;border:2.2px solid #4a90d0;"></div>
<svg class="a" style="left:2052.5px;top:1136px;" width="36.5" height="28" viewBox="0 0 36.5 28"><defs><linearGradient id="sky" x1="0" y1="0" x2="0" y2="1"><stop offset="0" stop-color="#5c8fe0"/><stop offset="0.45" stop-color="#c9dcf4"/><stop offset="0.62" stop-color="#e8eef6"/><stop offset="0.8" stop-color="#4a6fa8"/><stop offset="1" stop-color="#9db4d4"/></linearGradient></defs><rect x="0.5" y="0.5" width="35.5" height="27" fill="#e6ebf0" stroke="#b4bcc6" stroke-width="1"/><rect x="3" y="3" width="30.5" height="21.5" fill="url(#sky)"/><path d="M3 17.5 Q8 9 13 11 Q20 14 29 17.5 L29 19 H3 Z" fill="#3e6a3e"/><path d="M3 12 Q12 4 22 8 Q28 10 33.5 9 V14 Q24 13 16 11 Q9 9 3 14Z" fill="#fff" opacity=".75"/></svg>
<svg class="a" style="left:2008.5px;top:1129.5px;" width="36" height="36" viewBox="0 0 36 36"><path d="M9 4.5 H20 M24 4.5 H35" stroke="#dcdcdc" stroke-width="2.2"/><rect x="0.5" y="1.5" width="6" height="6" rx="1" fill="#f0f0f0" stroke="#c4c4c4" stroke-width="1"/><path d="M9 10.5 H20 M24 10.5 H35" stroke="#dcdcdc" stroke-width="2.2"/><rect x="0.5" y="7.5" width="6" height="6" rx="1" fill="#f0f0f0" stroke="#c4c4c4" stroke-width="1"/><path d="M9 17 H20 M24 17 H35" stroke="#a4a4a4" stroke-width="2.6"/><rect x="0.5" y="14" width="6" height="6" rx="1" fill="#f0f0f0" stroke="#c4c4c4" stroke-width="1"/><path d="M9 24 H20 M24 24 H35" stroke="#a4a4a4" stroke-width="2.6"/><rect x="0.5" y="21" width="6" height="6" rx="1" fill="#f0f0f0" stroke="#c4c4c4" stroke-width="1"/><path d="M9 31 H20 M24 31 H35" stroke="#a4a4a4" stroke-width="2.6"/><rect x="0.5" y="28" width="6" height="6" rx="1" fill="#f0f0f0" stroke="#c4c4c4" stroke-width="1"/><rect x="1.5" y="15" width="4" height="4" fill="#e07070"/><rect x="1.5" y="2.5" width="4" height="4" fill="#707070"/><rect x="1.5" y="29" width="4" height="4" fill="#909090"/></svg>
</body></html>
